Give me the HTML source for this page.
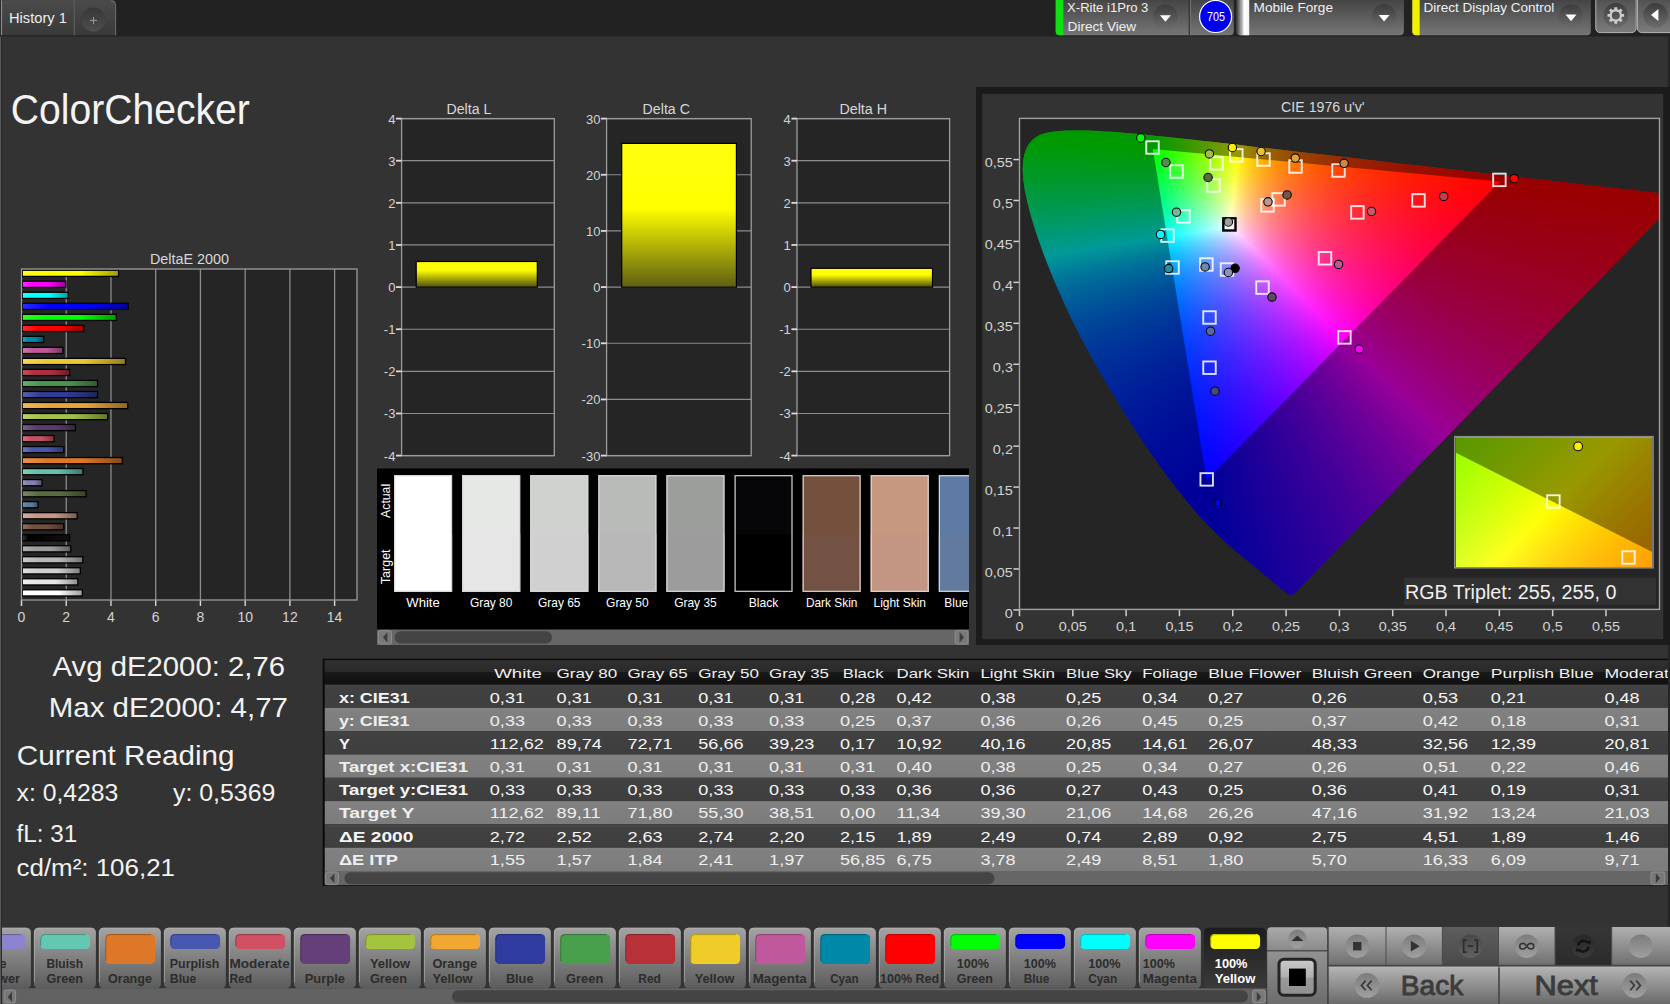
<!DOCTYPE html>
<html lang="en"><head><meta charset="utf-8"><title>ColorChecker</title>
<style>html,body{margin:0;padding:0;background:#333;overflow:hidden;}body{width:1670px;height:1004px;position:relative;overflow:hidden;font-family:"Liberation Sans",sans-serif;}svg{position:absolute;left:0;top:0;}svg text{font-family:"Liberation Sans",sans-serif;}.cl{position:absolute;left:0;top:0;right:0;bottom:0;mix-blend-mode:screen;background-blend-mode:darken;}</style></head><body>
<svg width="1670" height="1004" viewBox="0 0 1670 1004"><defs>
<linearGradient id="gPanel" x1="0" y1="0" x2="0" y2="1"><stop offset="0" stop-color="#454545"/><stop offset="1" stop-color="#767676"/></linearGradient>
<linearGradient id="gTab" x1="0" y1="0" x2="0" y2="1"><stop offset="0" stop-color="#4b4b4b"/><stop offset="1" stop-color="#393939"/></linearGradient>
<linearGradient id="gDrop" x1="0" y1="0" x2="0" y2="1"><stop offset="0" stop-color="#3c3c3c"/><stop offset="1" stop-color="#6c6c6c"/></linearGradient>
<linearGradient id="gGear" x1="0" y1="0" x2="0" y2="1"><stop offset="0" stop-color="#505050"/><stop offset="1" stop-color="#7c7c7c"/></linearGradient>
<linearGradient id="gWhiteStripe" x1="0" y1="0" x2="1" y2="0"><stop offset="0" stop-color="#3a3a3a"/><stop offset="0.45" stop-color="#bdbdbd"/><stop offset="0.6" stop-color="#ffffff"/><stop offset="1" stop-color="#f4f4f4"/></linearGradient>
<linearGradient id="gPlus" x1="0" y1="0" x2="0" y2="1"><stop offset="0" stop-color="#363636"/><stop offset="1" stop-color="#4e4e4e"/></linearGradient>
<linearGradient id="b0" x1="0" y1="0" x2="1" y2="0"><stop offset="0" stop-color="#ffff2d"/><stop offset="0.25" stop-color="#ffff00"/><stop offset="0.6" stop-color="#ffff00"/><stop offset="1" stop-color="#9e9e00"/></linearGradient>
<linearGradient id="b1" x1="0" y1="0" x2="1" y2="0"><stop offset="0" stop-color="#ff2dff"/><stop offset="0.25" stop-color="#ff00ff"/><stop offset="0.6" stop-color="#ff00ff"/><stop offset="1" stop-color="#9e009e"/></linearGradient>
<linearGradient id="b2" x1="0" y1="0" x2="1" y2="0"><stop offset="0" stop-color="#2dffff"/><stop offset="0.25" stop-color="#00ffff"/><stop offset="0.6" stop-color="#00ffff"/><stop offset="1" stop-color="#009e9e"/></linearGradient>
<linearGradient id="b3" x1="0" y1="0" x2="1" y2="0"><stop offset="0" stop-color="#2d2dff"/><stop offset="0.25" stop-color="#0000ff"/><stop offset="0.6" stop-color="#0000ff"/><stop offset="1" stop-color="#00009e"/></linearGradient>
<linearGradient id="b4" x1="0" y1="0" x2="1" y2="0"><stop offset="0" stop-color="#2dff2d"/><stop offset="0.25" stop-color="#00ff00"/><stop offset="0.6" stop-color="#00ff00"/><stop offset="1" stop-color="#009e00"/></linearGradient>
<linearGradient id="b5" x1="0" y1="0" x2="1" y2="0"><stop offset="0" stop-color="#ff2d2d"/><stop offset="0.25" stop-color="#ff0000"/><stop offset="0.6" stop-color="#ff0000"/><stop offset="1" stop-color="#9e0000"/></linearGradient>
<linearGradient id="b6" x1="0" y1="0" x2="1" y2="0"><stop offset="0" stop-color="#2da1bc"/><stop offset="0.25" stop-color="#0088a8"/><stop offset="0.6" stop-color="#0088a8"/><stop offset="1" stop-color="#005468"/></linearGradient>
<linearGradient id="b7" x1="0" y1="0" x2="1" y2="0"><stop offset="0" stop-color="#d078b2"/><stop offset="0.25" stop-color="#c0589c"/><stop offset="0.6" stop-color="#c0589c"/><stop offset="1" stop-color="#773761"/></linearGradient>
<linearGradient id="b8" x1="0" y1="0" x2="1" y2="0"><stop offset="0" stop-color="#f7d756"/><stop offset="0.25" stop-color="#eec830"/><stop offset="0.6" stop-color="#eec830"/><stop offset="1" stop-color="#947c1e"/></linearGradient>
<linearGradient id="b9" x1="0" y1="0" x2="1" y2="0"><stop offset="0" stop-color="#c35663"/><stop offset="0.25" stop-color="#b03040"/><stop offset="0.6" stop-color="#b03040"/><stop offset="1" stop-color="#6d1e28"/></linearGradient>
<linearGradient id="b10" x1="0" y1="0" x2="1" y2="0"><stop offset="0" stop-color="#6aae6e"/><stop offset="0.25" stop-color="#48984c"/><stop offset="0.6" stop-color="#48984c"/><stop offset="1" stop-color="#2d5e2f"/></linearGradient>
<linearGradient id="b11" x1="0" y1="0" x2="1" y2="0"><stop offset="0" stop-color="#5660ae"/><stop offset="0.25" stop-color="#303c98"/><stop offset="0.6" stop-color="#303c98"/><stop offset="1" stop-color="#1e255e"/></linearGradient>
<linearGradient id="b12" x1="0" y1="0" x2="1" y2="0"><stop offset="0" stop-color="#f2b85d"/><stop offset="0.25" stop-color="#e8a438"/><stop offset="0.6" stop-color="#e8a438"/><stop offset="1" stop-color="#906623"/></linearGradient>
<linearGradient id="b13" x1="0" y1="0" x2="1" y2="0"><stop offset="0" stop-color="#b8d06a"/><stop offset="0.25" stop-color="#a4c048"/><stop offset="0.6" stop-color="#a4c048"/><stop offset="1" stop-color="#66772d"/></linearGradient>
<linearGradient id="b14" x1="0" y1="0" x2="1" y2="0"><stop offset="0" stop-color="#7b6089"/><stop offset="0.25" stop-color="#5c3c6c"/><stop offset="0.6" stop-color="#5c3c6c"/><stop offset="1" stop-color="#392543"/></linearGradient>
<linearGradient id="b15" x1="0" y1="0" x2="1" y2="0"><stop offset="0" stop-color="#d77182"/><stop offset="0.25" stop-color="#c85064"/><stop offset="0.6" stop-color="#c85064"/><stop offset="1" stop-color="#7c323e"/></linearGradient>
<linearGradient id="b16" x1="0" y1="0" x2="1" y2="0"><stop offset="0" stop-color="#6a78bc"/><stop offset="0.25" stop-color="#4858a8"/><stop offset="0.6" stop-color="#4858a8"/><stop offset="1" stop-color="#2d3768"/></linearGradient>
<linearGradient id="b17" x1="0" y1="0" x2="1" y2="0"><stop offset="0" stop-color="#e8934f"/><stop offset="0.25" stop-color="#dc7828"/><stop offset="0.6" stop-color="#dc7828"/><stop offset="1" stop-color="#884a19"/></linearGradient>
<linearGradient id="b18" x1="0" y1="0" x2="1" y2="0"><stop offset="0" stop-color="#82d0bc"/><stop offset="0.25" stop-color="#64c0a8"/><stop offset="0.6" stop-color="#64c0a8"/><stop offset="1" stop-color="#3e7768"/></linearGradient>
<linearGradient id="b19" x1="0" y1="0" x2="1" y2="0"><stop offset="0" stop-color="#9d9ac6"/><stop offset="0.25" stop-color="#8480b4"/><stop offset="0.6" stop-color="#8480b4"/><stop offset="1" stop-color="#524f70"/></linearGradient>
<linearGradient id="b20" x1="0" y1="0" x2="1" y2="0"><stop offset="0" stop-color="#788963"/><stop offset="0.25" stop-color="#586c40"/><stop offset="0.6" stop-color="#586c40"/><stop offset="1" stop-color="#374328"/></linearGradient>
<linearGradient id="b21" x1="0" y1="0" x2="1" y2="0"><stop offset="0" stop-color="#7b96b5"/><stop offset="0.25" stop-color="#5c7ca0"/><stop offset="0.6" stop-color="#5c7ca0"/><stop offset="1" stop-color="#394d63"/></linearGradient>
<linearGradient id="b22" x1="0" y1="0" x2="1" y2="0"><stop offset="0" stop-color="#d4ae9d"/><stop offset="0.25" stop-color="#c49884"/><stop offset="0.6" stop-color="#c49884"/><stop offset="1" stop-color="#7a5e52"/></linearGradient>
<linearGradient id="b23" x1="0" y1="0" x2="1" y2="0"><stop offset="0" stop-color="#907163"/><stop offset="0.25" stop-color="#745040"/><stop offset="0.6" stop-color="#745040"/><stop offset="1" stop-color="#483228"/></linearGradient>
<linearGradient id="b24" x1="0" y1="0" x2="1" y2="0"><stop offset="0" stop-color="#3a3a3a"/><stop offset="0.12" stop-color="#000"/><stop offset="1" stop-color="#101010"/></linearGradient>
<linearGradient id="b25" x1="0" y1="0" x2="1" y2="0"><stop offset="0" stop-color="#b2b2b2"/><stop offset="0.25" stop-color="#9c9c9c"/><stop offset="0.6" stop-color="#9c9c9c"/><stop offset="1" stop-color="#616161"/></linearGradient>
<linearGradient id="b26" x1="0" y1="0" x2="1" y2="0"><stop offset="0" stop-color="#c9c9c9"/><stop offset="0.25" stop-color="#b8b8b8"/><stop offset="0.6" stop-color="#b8b8b8"/><stop offset="1" stop-color="#727272"/></linearGradient>
<linearGradient id="b27" x1="0" y1="0" x2="1" y2="0"><stop offset="0" stop-color="#dedede"/><stop offset="0.25" stop-color="#d0d0d0"/><stop offset="0.6" stop-color="#d0d0d0"/><stop offset="1" stop-color="#818181"/></linearGradient>
<linearGradient id="b28" x1="0" y1="0" x2="1" y2="0"><stop offset="0" stop-color="#f0f0f0"/><stop offset="0.25" stop-color="#e6e6e6"/><stop offset="0.6" stop-color="#e6e6e6"/><stop offset="1" stop-color="#8f8f8f"/></linearGradient>
<linearGradient id="b29" x1="0" y1="0" x2="1" y2="0"><stop offset="0" stop-color="#ffffff"/><stop offset="0.25" stop-color="#ffffff"/><stop offset="0.6" stop-color="#ffffff"/><stop offset="1" stop-color="#9e9e9e"/></linearGradient>
<linearGradient id="gYel" x1="0" y1="0" x2="0" y2="1"><stop offset="0" stop-color="#ffff10"/><stop offset="0.45" stop-color="#ffff00"/><stop offset="1" stop-color="#5e5e12"/></linearGradient>
<linearGradient id="gYelS" x1="0" y1="0" x2="0" y2="1"><stop offset="0" stop-color="#ffff10"/><stop offset="0.35" stop-color="#fcfc00"/><stop offset="1" stop-color="#4c4c10"/></linearGradient>
<linearGradient id="gHdr" x1="0" y1="0" x2="0" y2="1"><stop offset="0" stop-color="#303030"/><stop offset="0.48" stop-color="#2a2a2a"/><stop offset="0.5" stop-color="#191919"/><stop offset="1" stop-color="#101010"/></linearGradient>
<linearGradient id="gRowD" x1="0" y1="0" x2="0" y2="1"><stop offset="0" stop-color="#454545"/><stop offset="0.15" stop-color="#414141"/><stop offset="1" stop-color="#3e3e3e"/></linearGradient>
<linearGradient id="gRowL" x1="0" y1="0" x2="0" y2="1"><stop offset="0" stop-color="#848484"/><stop offset="0.15" stop-color="#808080"/><stop offset="1" stop-color="#7c7c7c"/></linearGradient>
<linearGradient id="gBtn" x1="0" y1="0" x2="0" y2="1"><stop offset="0" stop-color="#a4a4a4"/><stop offset="1" stop-color="#5c5c5c"/></linearGradient>
<linearGradient id="gBtnSel" x1="0" y1="0" x2="0" y2="1"><stop offset="0" stop-color="#1c1c1c"/><stop offset="1" stop-color="#3a3a3a"/></linearGradient>
<linearGradient id="gCtl" x1="0" y1="0" x2="0" y2="1"><stop offset="0" stop-color="#b0b0b0"/><stop offset="1" stop-color="#707070"/></linearGradient>
<linearGradient id="gCtlD" x1="0" y1="0" x2="0" y2="1"><stop offset="0" stop-color="#5e5e5e"/><stop offset="1" stop-color="#4a4a4a"/></linearGradient>
<linearGradient id="gCtlDD" x1="0" y1="0" x2="0" y2="1"><stop offset="0" stop-color="#363636"/><stop offset="1" stop-color="#2b2b2b"/></linearGradient>
<linearGradient id="gNav" x1="0" y1="0" x2="0" y2="1"><stop offset="0" stop-color="#b4b4b4"/><stop offset="1" stop-color="#6a6a6a"/></linearGradient>
<linearGradient id="gCirc" x1="0" y1="0" x2="0" y2="1"><stop offset="0" stop-color="#7c7c7c"/><stop offset="1" stop-color="#a0a0a0"/></linearGradient>
<linearGradient id="gCircD" x1="0" y1="0" x2="0" y2="1"><stop offset="0" stop-color="#484848"/><stop offset="1" stop-color="#626262"/></linearGradient>
<linearGradient id="gCircDD" x1="0" y1="0" x2="0" y2="1"><stop offset="0" stop-color="#282828"/><stop offset="1" stop-color="#3a3a3a"/></linearGradient>
<linearGradient id="gUp" x1="0" y1="0" x2="0" y2="1"><stop offset="0" stop-color="#aaaaaa"/><stop offset="1" stop-color="#8a8a8a"/></linearGradient>
<linearGradient id="gStopBg" x1="0" y1="0" x2="0" y2="1"><stop offset="0" stop-color="#929292"/><stop offset="1" stop-color="#6c6c6c"/></linearGradient>
<linearGradient id="gStopFr" x1="0" y1="0" x2="0" y2="1"><stop offset="0" stop-color="#cacaca"/><stop offset="0.5" stop-color="#b0b0b0"/><stop offset="0.52" stop-color="#9a9a9a"/><stop offset="1" stop-color="#909090"/></linearGradient>
</defs>
<rect x="0" y="0" width="1670" height="36.5" fill="#222"/>
<path d="M1.5 35.2 V3 Q1.5 0 4.5 0 H111 Q116 0 116 5 V35.2Z" fill="url(#gTab)"/>
<line x1="1.5" y1="0" x2="1.5" y2="35.2" stroke="#8c8c8c" stroke-width="1.2"/>
<line x1="74.3" y1="0" x2="74.3" y2="35.2" stroke="#5c5c5c" stroke-width="1.2"/>
<path d="M111 0.8 Q115.6 1.4 115.6 6 V35.2" fill="none" stroke="#6a6a6a" stroke-width="1.1"/>
<text x="9" y="23.4" font-size="14.6" fill="#eeeeee" textLength="57.8" lengthAdjust="spacingAndGlyphs">History 1</text>
<circle cx="93.4" cy="19.4" r="12" fill="url(#gPlus)"/>
<path d="M90 20.4 h7 M93.5 16.9 v7" stroke="#9a9a9a" stroke-width="1" fill="none"/>
<path d="M1055.7 0 H1233.8 V31.3 Q1233.8 35.3 1229.8 35.3 H1059.7 Q1055.7 35.3 1055.7 31.3Z" fill="url(#gPanel)"/>
<path d="M1055.7 0 H1063.4 V35.3 H1059.7 Q1055.7 35.3 1055.7 31.3Z" fill="#10e010"/>
<line x1="1189.3" y1="0" x2="1189.3" y2="35.3" stroke="#333" stroke-width="1.2"/>
<line x1="1190.5" y1="0" x2="1190.5" y2="35.3" stroke="#7a7a7a" stroke-width="0.8"/>
<text x="1067.1" y="12" font-size="12.2" fill="#f0f0f0" textLength="81.3" lengthAdjust="spacingAndGlyphs">X-Rite i1Pro 3</text>
<text x="1067.6" y="30.5" font-size="12.2" fill="#f0f0f0" textLength="68.6" lengthAdjust="spacingAndGlyphs">Direct View</text>
<circle cx="1165.4" cy="16.8" r="12.3" fill="url(#gDrop)"/><path d="M1159.9 15.2 h11 l-5.5 6.6Z" fill="#fff"/>
<circle cx="1215.6" cy="16.5" r="16" fill="#0000f0" stroke="#fff" stroke-width="1.2"/>
<text x="1206.9" y="21.3" font-size="12.2" fill="#fff" textLength="18" lengthAdjust="spacingAndGlyphs">705</text>
<path d="M1236.6 0 H1403.9 V31.3 Q1403.9 35.3 1399.9 35.3 H1240.6 Q1236.6 35.3 1236.6 31.3Z" fill="url(#gPanel)"/>
<path d="M1236.6 0 H1249.2 V35.3 H1240.6 Q1236.6 35.3 1236.6 31.3Z" fill="url(#gWhiteStripe)"/>
<text x="1253.6" y="12" font-size="12.2" fill="#f0f0f0" textLength="79.4" lengthAdjust="spacingAndGlyphs">Mobile Forge</text>
<circle cx="1384.1" cy="16.5" r="12.3" fill="url(#gDrop)"/><path d="M1378.6 14.9 h11 l-5.5 6.6Z" fill="#fff"/>
<path d="M1412.3 0 H1590.8 V31.3 Q1590.8 35.3 1586.8 35.3 H1416.3 Q1412.3 35.3 1412.3 31.3Z" fill="url(#gPanel)"/>
<path d="M1412.3 0 H1419.7 V35.3 H1416.3 Q1412.3 35.3 1412.3 31.3Z" fill="#f0f000"/>
<text x="1423.4" y="12.1" font-size="12.2" fill="#f0f0f0" textLength="131" lengthAdjust="spacingAndGlyphs">Direct Display Control</text>
<circle cx="1571" cy="16.2" r="12" fill="url(#gDrop)"/><path d="M1565.5 14.6 h11 l-5.5 6.6Z" fill="#fff"/>
<path d="M1595.8 -2 H1636.2 V27.8 Q1636.2 32.6 1631.2 32.6 H1600.8 Q1595.8 32.6 1595.8 27.8Z" fill="url(#gGear)" stroke="#b4b4b4" stroke-width="1"/>
<circle cx="1615.8" cy="15.4" r="12.3" fill="url(#gDrop)"/>
<path d="M1624.07 13.96 L1624.07 16.84 L1621.93 16.87 L1621.17 18.69 L1622.67 20.23 L1620.63 22.27 L1619.09 20.77 L1617.27 21.53 L1617.24 23.67 L1614.36 23.67 L1614.33 21.53 L1612.51 20.77 L1610.97 22.27 L1608.93 20.23 L1610.43 18.69 L1609.67 16.87 L1607.53 16.84 L1607.53 13.96 L1609.67 13.93 L1610.43 12.11 L1608.93 10.57 L1610.97 8.53 L1612.51 10.03 L1614.33 9.27 L1614.36 7.13 L1617.24 7.13 L1617.27 9.27 L1619.09 10.03 L1620.63 8.53 L1622.67 10.57 L1621.17 12.11 L1621.93 13.93Z M1611.8 15.4 a4 4 0 1 0 8 0 a4 4 0 1 0 -8 0Z" fill="#cdcdcd" fill-rule="evenodd"/>
<path d="M1637.4 -2 H1675 V32.6 H1642.4 Q1637.4 32.6 1637.4 27.8Z" fill="url(#gGear)" stroke="#b4b4b4" stroke-width="1"/>
<circle cx="1655.6" cy="15.4" r="12.3" fill="url(#gDrop)"/>
<path d="M1651 15 L1658.4 8.9 V21.1Z" fill="#fff"/>
<rect x="0" y="36.5" width="1" height="967.5" fill="#585858"/>
<rect x="1" y="36.5" width="1" height="967.5" fill="#292929"/>
<rect x="1667.8" y="36.5" width="2.2" height="889.5" fill="#242424"/>
<text x="10.8" y="123.6" font-size="42.2" fill="#f4f4f4" textLength="239" lengthAdjust="spacingAndGlyphs">ColorChecker</text>
<text x="149.9" y="263.5" font-size="14" fill="#d8d8d8" textLength="79.1" lengthAdjust="spacingAndGlyphs">DeltaE 2000</text>
<rect x="21.5" y="269" width="335.5" height="331" fill="#252525"/>
<line x1="66.23" y1="269" x2="66.23" y2="600" stroke="#8c8c8c" stroke-width="1.3"/>
<line x1="66.23" y1="600" x2="66.23" y2="606" stroke="#d8d8d8" stroke-width="1.4"/>
<line x1="110.97" y1="269" x2="110.97" y2="600" stroke="#8c8c8c" stroke-width="1.3"/>
<line x1="110.97" y1="600" x2="110.97" y2="606" stroke="#d8d8d8" stroke-width="1.4"/>
<line x1="155.7" y1="269" x2="155.7" y2="600" stroke="#8c8c8c" stroke-width="1.3"/>
<line x1="155.7" y1="600" x2="155.7" y2="606" stroke="#d8d8d8" stroke-width="1.4"/>
<line x1="200.43" y1="269" x2="200.43" y2="600" stroke="#8c8c8c" stroke-width="1.3"/>
<line x1="200.43" y1="600" x2="200.43" y2="606" stroke="#d8d8d8" stroke-width="1.4"/>
<line x1="245.17" y1="269" x2="245.17" y2="600" stroke="#8c8c8c" stroke-width="1.3"/>
<line x1="245.17" y1="600" x2="245.17" y2="606" stroke="#d8d8d8" stroke-width="1.4"/>
<line x1="289.9" y1="269" x2="289.9" y2="600" stroke="#8c8c8c" stroke-width="1.3"/>
<line x1="289.9" y1="600" x2="289.9" y2="606" stroke="#d8d8d8" stroke-width="1.4"/>
<line x1="334.63" y1="269" x2="334.63" y2="600" stroke="#8c8c8c" stroke-width="1.3"/>
<line x1="334.63" y1="600" x2="334.63" y2="606" stroke="#d8d8d8" stroke-width="1.4"/>
<line x1="21.5" y1="600" x2="21.5" y2="606" stroke="#d8d8d8" stroke-width="1.5"/>
<rect x="22.3" y="270.2" width="96.27" height="6.2" fill="url(#b0)" stroke="#000" stroke-width="1.3"/>
<rect x="22.3" y="281.22" width="43.49" height="6.2" fill="url(#b1)" stroke="#000" stroke-width="1.3"/>
<rect x="22.3" y="292.24" width="45.95" height="6.2" fill="url(#b2)" stroke="#000" stroke-width="1.3"/>
<rect x="22.3" y="303.26" width="105.89" height="6.2" fill="url(#b3)" stroke="#000" stroke-width="1.3"/>
<rect x="22.3" y="314.28" width="94.03" height="6.2" fill="url(#b4)" stroke="#000" stroke-width="1.3"/>
<rect x="22.3" y="325.3" width="61.38" height="6.2" fill="url(#b5)" stroke="#000" stroke-width="1.3"/>
<rect x="22.3" y="336.32" width="21.34" height="6.2" fill="url(#b6)" stroke="#000" stroke-width="1.3"/>
<rect x="22.3" y="347.34" width="40.58" height="6.2" fill="url(#b7)" stroke="#000" stroke-width="1.3"/>
<rect x="22.3" y="358.36" width="103.21" height="6.2" fill="url(#b8)" stroke="#000" stroke-width="1.3"/>
<rect x="22.3" y="369.38" width="47.29" height="6.2" fill="url(#b9)" stroke="#000" stroke-width="1.3"/>
<rect x="22.3" y="380.4" width="75.25" height="6.2" fill="url(#b10)" stroke="#000" stroke-width="1.3"/>
<rect x="22.3" y="391.42" width="75.25" height="6.2" fill="url(#b11)" stroke="#000" stroke-width="1.3"/>
<rect x="22.3" y="402.44" width="105.44" height="6.2" fill="url(#b12)" stroke="#000" stroke-width="1.3"/>
<rect x="22.3" y="413.46" width="85.31" height="6.2" fill="url(#b13)" stroke="#000" stroke-width="1.3"/>
<rect x="22.3" y="424.48" width="53.1" height="6.2" fill="url(#b14)" stroke="#000" stroke-width="1.3"/>
<rect x="22.3" y="435.5" width="31.86" height="6.2" fill="url(#b15)" stroke="#000" stroke-width="1.3"/>
<rect x="22.3" y="446.52" width="41.47" height="6.2" fill="url(#b16)" stroke="#000" stroke-width="1.3"/>
<rect x="22.3" y="457.54" width="100.07" height="6.2" fill="url(#b17)" stroke="#000" stroke-width="1.3"/>
<rect x="22.3" y="468.56" width="60.71" height="6.2" fill="url(#b18)" stroke="#000" stroke-width="1.3"/>
<rect x="22.3" y="479.58" width="19.78" height="6.2" fill="url(#b19)" stroke="#000" stroke-width="1.3"/>
<rect x="22.3" y="490.6" width="63.84" height="6.2" fill="url(#b20)" stroke="#000" stroke-width="1.3"/>
<rect x="22.3" y="501.62" width="15.75" height="6.2" fill="url(#b21)" stroke="#000" stroke-width="1.3"/>
<rect x="22.3" y="512.64" width="54.89" height="6.2" fill="url(#b22)" stroke="#000" stroke-width="1.3"/>
<rect x="22.3" y="523.66" width="41.47" height="6.2" fill="url(#b23)" stroke="#000" stroke-width="1.3"/>
<rect x="22.3" y="534.68" width="47.29" height="6.2" fill="url(#b24)" stroke="#000" stroke-width="1.3"/>
<rect x="22.3" y="545.7" width="48.41" height="6.2" fill="url(#b25)" stroke="#000" stroke-width="1.3"/>
<rect x="22.3" y="556.72" width="60.48" height="6.2" fill="url(#b26)" stroke="#000" stroke-width="1.3"/>
<rect x="22.3" y="567.74" width="58.02" height="6.2" fill="url(#b27)" stroke="#000" stroke-width="1.3"/>
<rect x="22.3" y="578.76" width="55.56" height="6.2" fill="url(#b28)" stroke="#000" stroke-width="1.3"/>
<rect x="22.3" y="589.78" width="60.04" height="6.2" fill="url(#b29)" stroke="#000" stroke-width="1.3"/>
<rect x="21.5" y="269" width="335.5" height="331" fill="none" stroke="#9c9c9c" stroke-width="1.3"/>
<text x="21.5" y="622.2" font-size="14" fill="#d4d4d4" text-anchor="middle">0</text>
<text x="66.23" y="622.2" font-size="14" fill="#d4d4d4" text-anchor="middle">2</text>
<text x="110.97" y="622.2" font-size="14" fill="#d4d4d4" text-anchor="middle">4</text>
<text x="155.7" y="622.2" font-size="14" fill="#d4d4d4" text-anchor="middle">6</text>
<text x="200.43" y="622.2" font-size="14" fill="#d4d4d4" text-anchor="middle">8</text>
<text x="245.17" y="622.2" font-size="14" fill="#d4d4d4" text-anchor="middle">10</text>
<text x="289.9" y="622.2" font-size="14" fill="#d4d4d4" text-anchor="middle">12</text>
<text x="334.63" y="622.2" font-size="14" fill="#d4d4d4" text-anchor="middle">14</text>
<text x="446.5" y="114.2" font-size="14" fill="#d8d8d8" textLength="44.9" lengthAdjust="spacingAndGlyphs">Delta L</text>
<rect x="401.6" y="118.6" width="152.7" height="337" fill="#252525"/>
<line x1="401.6" y1="118.6" x2="554.3" y2="118.6" stroke="#8c8c8c" stroke-width="1.2"/>
<line x1="401.6" y1="160.72" x2="554.3" y2="160.72" stroke="#8c8c8c" stroke-width="1.2"/>
<line x1="401.6" y1="202.85" x2="554.3" y2="202.85" stroke="#8c8c8c" stroke-width="1.2"/>
<line x1="401.6" y1="244.97" x2="554.3" y2="244.97" stroke="#8c8c8c" stroke-width="1.2"/>
<line x1="401.6" y1="287.1" x2="554.3" y2="287.1" stroke="#8c8c8c" stroke-width="1.2"/>
<line x1="401.6" y1="329.23" x2="554.3" y2="329.23" stroke="#8c8c8c" stroke-width="1.2"/>
<line x1="401.6" y1="371.35" x2="554.3" y2="371.35" stroke="#8c8c8c" stroke-width="1.2"/>
<line x1="401.6" y1="413.48" x2="554.3" y2="413.48" stroke="#8c8c8c" stroke-width="1.2"/>
<line x1="401.6" y1="455.6" x2="554.3" y2="455.6" stroke="#8c8c8c" stroke-width="1.2"/>
<rect x="401.6" y="118.6" width="152.7" height="337" fill="none" stroke="#9c9c9c" stroke-width="1.3"/>
<line x1="396" y1="118.6" x2="401.6" y2="118.6" stroke="#dcdcdc" stroke-width="1.8"/>
<text x="395.4" y="123.5" font-size="13" fill="#d4d4d4" text-anchor="end">4</text>
<line x1="396" y1="160.72" x2="401.6" y2="160.72" stroke="#dcdcdc" stroke-width="1.8"/>
<text x="395.4" y="165.62" font-size="13" fill="#d4d4d4" text-anchor="end">3</text>
<line x1="396" y1="202.85" x2="401.6" y2="202.85" stroke="#dcdcdc" stroke-width="1.8"/>
<text x="395.4" y="207.75" font-size="13" fill="#d4d4d4" text-anchor="end">2</text>
<line x1="396" y1="244.97" x2="401.6" y2="244.97" stroke="#dcdcdc" stroke-width="1.8"/>
<text x="395.4" y="249.88" font-size="13" fill="#d4d4d4" text-anchor="end">1</text>
<line x1="396" y1="287.1" x2="401.6" y2="287.1" stroke="#dcdcdc" stroke-width="1.8"/>
<text x="395.4" y="292" font-size="13" fill="#d4d4d4" text-anchor="end">0</text>
<line x1="396" y1="329.23" x2="401.6" y2="329.23" stroke="#dcdcdc" stroke-width="1.8"/>
<text x="395.4" y="334.12" font-size="13" fill="#d4d4d4" text-anchor="end">-1</text>
<line x1="396" y1="371.35" x2="401.6" y2="371.35" stroke="#dcdcdc" stroke-width="1.8"/>
<text x="395.4" y="376.25" font-size="13" fill="#d4d4d4" text-anchor="end">-2</text>
<line x1="396" y1="413.48" x2="401.6" y2="413.48" stroke="#dcdcdc" stroke-width="1.8"/>
<text x="395.4" y="418.38" font-size="13" fill="#d4d4d4" text-anchor="end">-3</text>
<line x1="396" y1="455.6" x2="401.6" y2="455.6" stroke="#dcdcdc" stroke-width="1.8"/>
<text x="395.4" y="460.5" font-size="13" fill="#d4d4d4" text-anchor="end">-4</text>
<rect x="416.2" y="261.5" width="121.1" height="25.7" fill="url(#gYelS)" stroke="#000" stroke-width="1.2"/>
<text x="642.6" y="114.2" font-size="14" fill="#d8d8d8" textLength="47.3" lengthAdjust="spacingAndGlyphs">Delta C</text>
<rect x="606.6" y="118.6" width="144.6" height="337" fill="#252525"/>
<line x1="606.6" y1="118.6" x2="751.2" y2="118.6" stroke="#8c8c8c" stroke-width="1.2"/>
<line x1="606.6" y1="174.77" x2="751.2" y2="174.77" stroke="#8c8c8c" stroke-width="1.2"/>
<line x1="606.6" y1="230.93" x2="751.2" y2="230.93" stroke="#8c8c8c" stroke-width="1.2"/>
<line x1="606.6" y1="287.1" x2="751.2" y2="287.1" stroke="#8c8c8c" stroke-width="1.2"/>
<line x1="606.6" y1="343.27" x2="751.2" y2="343.27" stroke="#8c8c8c" stroke-width="1.2"/>
<line x1="606.6" y1="399.43" x2="751.2" y2="399.43" stroke="#8c8c8c" stroke-width="1.2"/>
<line x1="606.6" y1="455.6" x2="751.2" y2="455.6" stroke="#8c8c8c" stroke-width="1.2"/>
<rect x="606.6" y="118.6" width="144.6" height="337" fill="none" stroke="#9c9c9c" stroke-width="1.3"/>
<line x1="601" y1="118.6" x2="606.6" y2="118.6" stroke="#dcdcdc" stroke-width="1.8"/>
<text x="600.4" y="123.5" font-size="13" fill="#d4d4d4" text-anchor="end">30</text>
<line x1="601" y1="174.77" x2="606.6" y2="174.77" stroke="#dcdcdc" stroke-width="1.8"/>
<text x="600.4" y="179.67" font-size="13" fill="#d4d4d4" text-anchor="end">20</text>
<line x1="601" y1="230.93" x2="606.6" y2="230.93" stroke="#dcdcdc" stroke-width="1.8"/>
<text x="600.4" y="235.83" font-size="13" fill="#d4d4d4" text-anchor="end">10</text>
<line x1="601" y1="287.1" x2="606.6" y2="287.1" stroke="#dcdcdc" stroke-width="1.8"/>
<text x="600.4" y="292" font-size="13" fill="#d4d4d4" text-anchor="end">0</text>
<line x1="601" y1="343.27" x2="606.6" y2="343.27" stroke="#dcdcdc" stroke-width="1.8"/>
<text x="600.4" y="348.17" font-size="13" fill="#d4d4d4" text-anchor="end">-10</text>
<line x1="601" y1="399.43" x2="606.6" y2="399.43" stroke="#dcdcdc" stroke-width="1.8"/>
<text x="600.4" y="404.33" font-size="13" fill="#d4d4d4" text-anchor="end">-20</text>
<line x1="601" y1="455.6" x2="606.6" y2="455.6" stroke="#dcdcdc" stroke-width="1.8"/>
<text x="600.4" y="460.5" font-size="13" fill="#d4d4d4" text-anchor="end">-30</text>
<rect x="621.7" y="143.4" width="114.7" height="143.8" fill="url(#gYel)" stroke="#000" stroke-width="1.2"/>
<text x="839.4" y="114.2" font-size="14" fill="#d8d8d8" textLength="47.7" lengthAdjust="spacingAndGlyphs">Delta H</text>
<rect x="797" y="118.6" width="152.6" height="337" fill="#252525"/>
<line x1="797" y1="118.6" x2="949.6" y2="118.6" stroke="#8c8c8c" stroke-width="1.2"/>
<line x1="797" y1="160.72" x2="949.6" y2="160.72" stroke="#8c8c8c" stroke-width="1.2"/>
<line x1="797" y1="202.85" x2="949.6" y2="202.85" stroke="#8c8c8c" stroke-width="1.2"/>
<line x1="797" y1="244.97" x2="949.6" y2="244.97" stroke="#8c8c8c" stroke-width="1.2"/>
<line x1="797" y1="287.1" x2="949.6" y2="287.1" stroke="#8c8c8c" stroke-width="1.2"/>
<line x1="797" y1="329.23" x2="949.6" y2="329.23" stroke="#8c8c8c" stroke-width="1.2"/>
<line x1="797" y1="371.35" x2="949.6" y2="371.35" stroke="#8c8c8c" stroke-width="1.2"/>
<line x1="797" y1="413.48" x2="949.6" y2="413.48" stroke="#8c8c8c" stroke-width="1.2"/>
<line x1="797" y1="455.6" x2="949.6" y2="455.6" stroke="#8c8c8c" stroke-width="1.2"/>
<rect x="797" y="118.6" width="152.6" height="337" fill="none" stroke="#9c9c9c" stroke-width="1.3"/>
<line x1="791.4" y1="118.6" x2="797" y2="118.6" stroke="#dcdcdc" stroke-width="1.8"/>
<text x="790.8" y="123.5" font-size="13" fill="#d4d4d4" text-anchor="end">4</text>
<line x1="791.4" y1="160.72" x2="797" y2="160.72" stroke="#dcdcdc" stroke-width="1.8"/>
<text x="790.8" y="165.62" font-size="13" fill="#d4d4d4" text-anchor="end">3</text>
<line x1="791.4" y1="202.85" x2="797" y2="202.85" stroke="#dcdcdc" stroke-width="1.8"/>
<text x="790.8" y="207.75" font-size="13" fill="#d4d4d4" text-anchor="end">2</text>
<line x1="791.4" y1="244.97" x2="797" y2="244.97" stroke="#dcdcdc" stroke-width="1.8"/>
<text x="790.8" y="249.88" font-size="13" fill="#d4d4d4" text-anchor="end">1</text>
<line x1="791.4" y1="287.1" x2="797" y2="287.1" stroke="#dcdcdc" stroke-width="1.8"/>
<text x="790.8" y="292" font-size="13" fill="#d4d4d4" text-anchor="end">0</text>
<line x1="791.4" y1="329.23" x2="797" y2="329.23" stroke="#dcdcdc" stroke-width="1.8"/>
<text x="790.8" y="334.12" font-size="13" fill="#d4d4d4" text-anchor="end">-1</text>
<line x1="791.4" y1="371.35" x2="797" y2="371.35" stroke="#dcdcdc" stroke-width="1.8"/>
<text x="790.8" y="376.25" font-size="13" fill="#d4d4d4" text-anchor="end">-2</text>
<line x1="791.4" y1="413.48" x2="797" y2="413.48" stroke="#dcdcdc" stroke-width="1.8"/>
<text x="790.8" y="418.38" font-size="13" fill="#d4d4d4" text-anchor="end">-3</text>
<line x1="791.4" y1="455.6" x2="797" y2="455.6" stroke="#dcdcdc" stroke-width="1.8"/>
<text x="790.8" y="460.5" font-size="13" fill="#d4d4d4" text-anchor="end">-4</text>
<rect x="811" y="268.3" width="121.5" height="18.9" fill="url(#gYelS)" stroke="#000" stroke-width="1.2"/>
<clipPath id="cSw"><rect x="377" y="468.5" width="592" height="176.5"/></clipPath>
<rect x="377" y="468.5" width="592" height="176.5" fill="#000"/>
<g clip-path="url(#cSw)">
<rect x="394" y="475.1" width="58.1" height="116.8" fill="#ffffff"/>
<rect x="394" y="534" width="58.1" height="57.9" fill="#ffffff"/>
<rect x="394.6" y="475.7" width="56.9" height="115.6" fill="none" stroke="#d6d6d6" stroke-width="1.2"/>
<text x="406.3" y="606.6" font-size="12.2" fill="#fff" textLength="33.5" lengthAdjust="spacingAndGlyphs">White</text>
<rect x="462.1" y="475.1" width="58.1" height="116.8" fill="#e6e8e6"/>
<rect x="462.1" y="534" width="58.1" height="57.9" fill="#e6e6e6"/>
<rect x="462.7" y="475.7" width="56.9" height="115.6" fill="none" stroke="#d6d6d6" stroke-width="1.2"/>
<text x="469.9" y="606.6" font-size="12.2" fill="#fff" textLength="42.5" lengthAdjust="spacingAndGlyphs">Gray 80</text>
<rect x="530.2" y="475.1" width="58.1" height="116.8" fill="#d0d2d0"/>
<rect x="530.2" y="534" width="58.1" height="57.9" fill="#d0d0d0"/>
<rect x="530.8" y="475.7" width="56.9" height="115.6" fill="none" stroke="#d6d6d6" stroke-width="1.2"/>
<text x="538" y="606.6" font-size="12.2" fill="#fff" textLength="42.5" lengthAdjust="spacingAndGlyphs">Gray 65</text>
<rect x="598.3" y="475.1" width="58.1" height="116.8" fill="#b9bbb9"/>
<rect x="598.3" y="534" width="58.1" height="57.9" fill="#b8b8b8"/>
<rect x="598.9" y="475.7" width="56.9" height="115.6" fill="none" stroke="#d6d6d6" stroke-width="1.2"/>
<text x="606.1" y="606.6" font-size="12.2" fill="#fff" textLength="42.5" lengthAdjust="spacingAndGlyphs">Gray 50</text>
<rect x="666.4" y="475.1" width="58.1" height="116.8" fill="#9c9e9c"/>
<rect x="666.4" y="534" width="58.1" height="57.9" fill="#9c9c9c"/>
<rect x="667" y="475.7" width="56.9" height="115.6" fill="none" stroke="#d6d6d6" stroke-width="1.2"/>
<text x="674.2" y="606.6" font-size="12.2" fill="#fff" textLength="42.5" lengthAdjust="spacingAndGlyphs">Gray 35</text>
<rect x="734.5" y="475.1" width="58.1" height="116.8" fill="#060609"/>
<rect x="734.5" y="534" width="58.1" height="57.9" fill="#000000"/>
<rect x="735.1" y="475.7" width="56.9" height="115.6" fill="none" stroke="#d6d6d6" stroke-width="1.2"/>
<text x="748.8" y="606.6" font-size="12.2" fill="#fff" textLength="29.5" lengthAdjust="spacingAndGlyphs">Black</text>
<rect x="802.6" y="475.1" width="58.1" height="116.8" fill="#74503d"/>
<rect x="802.6" y="534" width="58.1" height="57.9" fill="#735244"/>
<rect x="803.2" y="475.7" width="56.9" height="115.6" fill="none" stroke="#d6d6d6" stroke-width="1.2"/>
<text x="805.9" y="606.6" font-size="12.2" fill="#fff" textLength="51.5" lengthAdjust="spacingAndGlyphs">Dark Skin</text>
<rect x="870.7" y="475.1" width="58.1" height="116.8" fill="#c69880"/>
<rect x="870.7" y="534" width="58.1" height="57.9" fill="#c29682"/>
<rect x="871.3" y="475.7" width="56.9" height="115.6" fill="none" stroke="#d6d6d6" stroke-width="1.2"/>
<text x="873.5" y="606.6" font-size="12.2" fill="#fff" textLength="52.5" lengthAdjust="spacingAndGlyphs">Light Skin</text>
<rect x="938.8" y="475.1" width="58.1" height="116.8" fill="#5e7ba3"/>
<rect x="938.8" y="534" width="58.1" height="57.9" fill="#627a9d"/>
<rect x="939.4" y="475.7" width="56.9" height="115.6" fill="none" stroke="#d6d6d6" stroke-width="1.2"/>
<text x="944.35" y="606.6" font-size="12.2" fill="#fff" textLength="47" lengthAdjust="spacingAndGlyphs">Blue Sky</text>
</g>
<text transform="translate(389.6 517.9) rotate(-90)" font-size="12.2" fill="#fff" textLength="34" lengthAdjust="spacingAndGlyphs">Actual</text>
<text transform="translate(389.6 584.2) rotate(-90)" font-size="12.2" fill="#fff" textLength="34.8" lengthAdjust="spacingAndGlyphs">Target</text>
<rect x="377" y="629.5" width="592" height="15.5" fill="#666"/>
<rect x="378.4" y="630.6" width="13.2" height="13.4" fill="#787878" stroke="#989898" stroke-width="0.8" rx="2"/>
<path d="M387.4 632.2 V642.4 L383 637.3Z" fill="#3c3c3c"/>
<rect x="955.2" y="630.6" width="12.8" height="13.4" fill="#787878" stroke="#989898" stroke-width="0.8" rx="2"/>
<path d="M959.6 632.2 V642.4 L964 637.3Z" fill="#3c3c3c"/>
<rect x="394.6" y="631.2" width="157.4" height="12.4" fill="#444" rx="6.2"/>
<text x="52.6" y="676.3" font-size="27.4" fill="#f2f2f2" textLength="232.4" lengthAdjust="spacingAndGlyphs">Avg dE2000: 2,76</text>
<text x="48.7" y="717.2" font-size="27.4" fill="#f2f2f2" textLength="239.3" lengthAdjust="spacingAndGlyphs">Max dE2000: 4,77</text>
<text x="16.8" y="765" font-size="28" fill="#f2f2f2" textLength="217.7" lengthAdjust="spacingAndGlyphs">Current Reading</text>
<text x="16.5" y="800.6" font-size="24.4" fill="#f2f2f2" textLength="101.9" lengthAdjust="spacingAndGlyphs">x: 0,4283</text>
<text x="173" y="800.6" font-size="24.4" fill="#f2f2f2" textLength="102.4" lengthAdjust="spacingAndGlyphs">y: 0,5369</text>
<text x="16.5" y="841.5" font-size="24.4" fill="#f2f2f2" textLength="60.7" lengthAdjust="spacingAndGlyphs">fL: 31</text>
<text x="16.5" y="875.7" font-size="24.4" fill="#f2f2f2" textLength="158.5" lengthAdjust="spacingAndGlyphs">cd/m²: 106,21</text>
<clipPath id="cTb"><rect x="324.5" y="659" width="1343.5" height="227"/></clipPath>
<rect x="322.7" y="658.7" width="1345.3" height="227.3" fill="#0a0a0a"/>
<rect x="324.5" y="660.2" width="1343.5" height="24.4" fill="url(#gHdr)"/>
<g clip-path="url(#cTb)">
<text x="494.3" y="677.8" font-size="12.4" fill="#f0f0f0" textLength="47.6" lengthAdjust="spacingAndGlyphs">White</text>
<text x="556.6" y="677.8" font-size="12.4" fill="#f0f0f0" textLength="60.6" lengthAdjust="spacingAndGlyphs">Gray 80</text>
<text x="627.4" y="677.8" font-size="12.4" fill="#f0f0f0" textLength="60.3" lengthAdjust="spacingAndGlyphs">Gray 65</text>
<text x="698.3" y="677.8" font-size="12.4" fill="#f0f0f0" textLength="60.6" lengthAdjust="spacingAndGlyphs">Gray 50</text>
<text x="769.1" y="677.8" font-size="12.4" fill="#f0f0f0" textLength="59.9" lengthAdjust="spacingAndGlyphs">Gray 35</text>
<text x="842.8" y="677.8" font-size="12.4" fill="#f0f0f0" textLength="40.7" lengthAdjust="spacingAndGlyphs">Black</text>
<text x="896.5" y="677.8" font-size="12.4" fill="#f0f0f0" textLength="72.9" lengthAdjust="spacingAndGlyphs">Dark Skin</text>
<text x="980.4" y="677.8" font-size="12.4" fill="#f0f0f0" textLength="74.7" lengthAdjust="spacingAndGlyphs">Light Skin</text>
<text x="1066.1" y="677.8" font-size="12.4" fill="#f0f0f0" textLength="65.6" lengthAdjust="spacingAndGlyphs">Blue Sky</text>
<text x="1142.3" y="677.8" font-size="12.4" fill="#f0f0f0" textLength="55.4" lengthAdjust="spacingAndGlyphs">Foliage</text>
<text x="1208.2" y="677.8" font-size="12.4" fill="#f0f0f0" textLength="93.3" lengthAdjust="spacingAndGlyphs">Blue Flower</text>
<text x="1311.7" y="677.8" font-size="12.4" fill="#f0f0f0" textLength="100.5" lengthAdjust="spacingAndGlyphs">Bluish Green</text>
<text x="1422.8" y="677.8" font-size="12.4" fill="#f0f0f0" textLength="57" lengthAdjust="spacingAndGlyphs">Orange</text>
<text x="1490.8" y="677.8" font-size="12.4" fill="#f0f0f0" textLength="103" lengthAdjust="spacingAndGlyphs">Purplish Blue</text>
<text x="1604.4" y="677.8" font-size="12.4" fill="#f0f0f0" textLength="111.6" lengthAdjust="spacingAndGlyphs">Moderate Red</text>
<rect x="324.5" y="684.6" width="1343.5" height="23.3" fill="url(#gRowD)"/>
<text x="338.9" y="702.7" font-size="15.2" fill="#f6f6f6" font-weight="bold" textLength="70.9" lengthAdjust="spacingAndGlyphs">x: CIE31</text>
<text x="489.8" y="702.7" font-size="15.2" fill="#f6f6f6" textLength="35.2" lengthAdjust="spacingAndGlyphs">0,31</text>
<text x="556.6" y="702.7" font-size="15.2" fill="#f6f6f6" textLength="35.2" lengthAdjust="spacingAndGlyphs">0,31</text>
<text x="627.4" y="702.7" font-size="15.2" fill="#f6f6f6" textLength="35.2" lengthAdjust="spacingAndGlyphs">0,31</text>
<text x="698.3" y="702.7" font-size="15.2" fill="#f6f6f6" textLength="35.2" lengthAdjust="spacingAndGlyphs">0,31</text>
<text x="769.1" y="702.7" font-size="15.2" fill="#f6f6f6" textLength="35.2" lengthAdjust="spacingAndGlyphs">0,31</text>
<text x="840" y="702.7" font-size="15.2" fill="#f6f6f6" textLength="35.2" lengthAdjust="spacingAndGlyphs">0,28</text>
<text x="896.5" y="702.7" font-size="15.2" fill="#f6f6f6" textLength="35.2" lengthAdjust="spacingAndGlyphs">0,42</text>
<text x="980.4" y="702.7" font-size="15.2" fill="#f6f6f6" textLength="35.2" lengthAdjust="spacingAndGlyphs">0,38</text>
<text x="1066.1" y="702.7" font-size="15.2" fill="#f6f6f6" textLength="35.2" lengthAdjust="spacingAndGlyphs">0,25</text>
<text x="1142.3" y="702.7" font-size="15.2" fill="#f6f6f6" textLength="35.2" lengthAdjust="spacingAndGlyphs">0,34</text>
<text x="1208.2" y="702.7" font-size="15.2" fill="#f6f6f6" textLength="35.2" lengthAdjust="spacingAndGlyphs">0,27</text>
<text x="1311.7" y="702.7" font-size="15.2" fill="#f6f6f6" textLength="35.2" lengthAdjust="spacingAndGlyphs">0,26</text>
<text x="1422.8" y="702.7" font-size="15.2" fill="#f6f6f6" textLength="35.2" lengthAdjust="spacingAndGlyphs">0,53</text>
<text x="1490.8" y="702.7" font-size="15.2" fill="#f6f6f6" textLength="35.2" lengthAdjust="spacingAndGlyphs">0,21</text>
<text x="1604.4" y="702.7" font-size="15.2" fill="#f6f6f6" textLength="35.2" lengthAdjust="spacingAndGlyphs">0,48</text>
<rect x="324.5" y="707.9" width="1343.5" height="23.3" fill="url(#gRowL)"/>
<text x="338.9" y="725.84" font-size="15.2" fill="#eeeeee" font-weight="bold" textLength="70.5" lengthAdjust="spacingAndGlyphs">y: CIE31</text>
<text x="489.8" y="725.84" font-size="15.2" fill="#eeeeee" textLength="35.2" lengthAdjust="spacingAndGlyphs">0,33</text>
<text x="556.6" y="725.84" font-size="15.2" fill="#eeeeee" textLength="35.2" lengthAdjust="spacingAndGlyphs">0,33</text>
<text x="627.4" y="725.84" font-size="15.2" fill="#eeeeee" textLength="35.2" lengthAdjust="spacingAndGlyphs">0,33</text>
<text x="698.3" y="725.84" font-size="15.2" fill="#eeeeee" textLength="35.2" lengthAdjust="spacingAndGlyphs">0,33</text>
<text x="769.1" y="725.84" font-size="15.2" fill="#eeeeee" textLength="35.2" lengthAdjust="spacingAndGlyphs">0,33</text>
<text x="840" y="725.84" font-size="15.2" fill="#eeeeee" textLength="35.2" lengthAdjust="spacingAndGlyphs">0,25</text>
<text x="896.5" y="725.84" font-size="15.2" fill="#eeeeee" textLength="35.2" lengthAdjust="spacingAndGlyphs">0,37</text>
<text x="980.4" y="725.84" font-size="15.2" fill="#eeeeee" textLength="35.2" lengthAdjust="spacingAndGlyphs">0,36</text>
<text x="1066.1" y="725.84" font-size="15.2" fill="#eeeeee" textLength="35.2" lengthAdjust="spacingAndGlyphs">0,26</text>
<text x="1142.3" y="725.84" font-size="15.2" fill="#eeeeee" textLength="35.2" lengthAdjust="spacingAndGlyphs">0,45</text>
<text x="1208.2" y="725.84" font-size="15.2" fill="#eeeeee" textLength="35.2" lengthAdjust="spacingAndGlyphs">0,25</text>
<text x="1311.7" y="725.84" font-size="15.2" fill="#eeeeee" textLength="35.2" lengthAdjust="spacingAndGlyphs">0,37</text>
<text x="1422.8" y="725.84" font-size="15.2" fill="#eeeeee" textLength="35.2" lengthAdjust="spacingAndGlyphs">0,42</text>
<text x="1490.8" y="725.84" font-size="15.2" fill="#eeeeee" textLength="35.2" lengthAdjust="spacingAndGlyphs">0,18</text>
<text x="1604.4" y="725.84" font-size="15.2" fill="#eeeeee" textLength="35.2" lengthAdjust="spacingAndGlyphs">0,31</text>
<rect x="324.5" y="731.2" width="1343.5" height="23.3" fill="url(#gRowD)"/>
<text x="338.9" y="748.98" font-size="15.2" fill="#f6f6f6" font-weight="bold" textLength="11" lengthAdjust="spacingAndGlyphs">Y</text>
<text x="489.8" y="748.98" font-size="15.2" fill="#f6f6f6" textLength="53.98" lengthAdjust="spacingAndGlyphs">112,62</text>
<text x="556.6" y="748.98" font-size="15.2" fill="#f6f6f6" textLength="45.26" lengthAdjust="spacingAndGlyphs">89,74</text>
<text x="627.4" y="748.98" font-size="15.2" fill="#f6f6f6" textLength="45.26" lengthAdjust="spacingAndGlyphs">72,71</text>
<text x="698.3" y="748.98" font-size="15.2" fill="#f6f6f6" textLength="45.26" lengthAdjust="spacingAndGlyphs">56,66</text>
<text x="769.1" y="748.98" font-size="15.2" fill="#f6f6f6" textLength="45.26" lengthAdjust="spacingAndGlyphs">39,23</text>
<text x="840" y="748.98" font-size="15.2" fill="#f6f6f6" textLength="35.2" lengthAdjust="spacingAndGlyphs">0,17</text>
<text x="896.5" y="748.98" font-size="15.2" fill="#f6f6f6" textLength="45.26" lengthAdjust="spacingAndGlyphs">10,92</text>
<text x="980.4" y="748.98" font-size="15.2" fill="#f6f6f6" textLength="45.26" lengthAdjust="spacingAndGlyphs">40,16</text>
<text x="1066.1" y="748.98" font-size="15.2" fill="#f6f6f6" textLength="45.26" lengthAdjust="spacingAndGlyphs">20,85</text>
<text x="1142.3" y="748.98" font-size="15.2" fill="#f6f6f6" textLength="45.26" lengthAdjust="spacingAndGlyphs">14,61</text>
<text x="1208.2" y="748.98" font-size="15.2" fill="#f6f6f6" textLength="45.26" lengthAdjust="spacingAndGlyphs">26,07</text>
<text x="1311.7" y="748.98" font-size="15.2" fill="#f6f6f6" textLength="45.26" lengthAdjust="spacingAndGlyphs">48,33</text>
<text x="1422.8" y="748.98" font-size="15.2" fill="#f6f6f6" textLength="45.26" lengthAdjust="spacingAndGlyphs">32,56</text>
<text x="1490.8" y="748.98" font-size="15.2" fill="#f6f6f6" textLength="45.26" lengthAdjust="spacingAndGlyphs">12,39</text>
<text x="1604.4" y="748.98" font-size="15.2" fill="#f6f6f6" textLength="45.26" lengthAdjust="spacingAndGlyphs">20,81</text>
<rect x="324.5" y="754.5" width="1343.5" height="23.3" fill="url(#gRowL)"/>
<text x="338.9" y="772.12" font-size="15.2" fill="#eeeeee" font-weight="bold" textLength="129.2" lengthAdjust="spacingAndGlyphs">Target x:CIE31</text>
<text x="489.8" y="772.12" font-size="15.2" fill="#eeeeee" textLength="35.2" lengthAdjust="spacingAndGlyphs">0,31</text>
<text x="556.6" y="772.12" font-size="15.2" fill="#eeeeee" textLength="35.2" lengthAdjust="spacingAndGlyphs">0,31</text>
<text x="627.4" y="772.12" font-size="15.2" fill="#eeeeee" textLength="35.2" lengthAdjust="spacingAndGlyphs">0,31</text>
<text x="698.3" y="772.12" font-size="15.2" fill="#eeeeee" textLength="35.2" lengthAdjust="spacingAndGlyphs">0,31</text>
<text x="769.1" y="772.12" font-size="15.2" fill="#eeeeee" textLength="35.2" lengthAdjust="spacingAndGlyphs">0,31</text>
<text x="840" y="772.12" font-size="15.2" fill="#eeeeee" textLength="35.2" lengthAdjust="spacingAndGlyphs">0,31</text>
<text x="896.5" y="772.12" font-size="15.2" fill="#eeeeee" textLength="35.2" lengthAdjust="spacingAndGlyphs">0,40</text>
<text x="980.4" y="772.12" font-size="15.2" fill="#eeeeee" textLength="35.2" lengthAdjust="spacingAndGlyphs">0,38</text>
<text x="1066.1" y="772.12" font-size="15.2" fill="#eeeeee" textLength="35.2" lengthAdjust="spacingAndGlyphs">0,25</text>
<text x="1142.3" y="772.12" font-size="15.2" fill="#eeeeee" textLength="35.2" lengthAdjust="spacingAndGlyphs">0,34</text>
<text x="1208.2" y="772.12" font-size="15.2" fill="#eeeeee" textLength="35.2" lengthAdjust="spacingAndGlyphs">0,27</text>
<text x="1311.7" y="772.12" font-size="15.2" fill="#eeeeee" textLength="35.2" lengthAdjust="spacingAndGlyphs">0,26</text>
<text x="1422.8" y="772.12" font-size="15.2" fill="#eeeeee" textLength="35.2" lengthAdjust="spacingAndGlyphs">0,51</text>
<text x="1490.8" y="772.12" font-size="15.2" fill="#eeeeee" textLength="35.2" lengthAdjust="spacingAndGlyphs">0,22</text>
<text x="1604.4" y="772.12" font-size="15.2" fill="#eeeeee" textLength="35.2" lengthAdjust="spacingAndGlyphs">0,46</text>
<rect x="324.5" y="777.8" width="1343.5" height="23.3" fill="url(#gRowD)"/>
<text x="338.9" y="795.26" font-size="15.2" fill="#f6f6f6" font-weight="bold" textLength="129.2" lengthAdjust="spacingAndGlyphs">Target y:CIE31</text>
<text x="489.8" y="795.26" font-size="15.2" fill="#f6f6f6" textLength="35.2" lengthAdjust="spacingAndGlyphs">0,33</text>
<text x="556.6" y="795.26" font-size="15.2" fill="#f6f6f6" textLength="35.2" lengthAdjust="spacingAndGlyphs">0,33</text>
<text x="627.4" y="795.26" font-size="15.2" fill="#f6f6f6" textLength="35.2" lengthAdjust="spacingAndGlyphs">0,33</text>
<text x="698.3" y="795.26" font-size="15.2" fill="#f6f6f6" textLength="35.2" lengthAdjust="spacingAndGlyphs">0,33</text>
<text x="769.1" y="795.26" font-size="15.2" fill="#f6f6f6" textLength="35.2" lengthAdjust="spacingAndGlyphs">0,33</text>
<text x="840" y="795.26" font-size="15.2" fill="#f6f6f6" textLength="35.2" lengthAdjust="spacingAndGlyphs">0,33</text>
<text x="896.5" y="795.26" font-size="15.2" fill="#f6f6f6" textLength="35.2" lengthAdjust="spacingAndGlyphs">0,36</text>
<text x="980.4" y="795.26" font-size="15.2" fill="#f6f6f6" textLength="35.2" lengthAdjust="spacingAndGlyphs">0,36</text>
<text x="1066.1" y="795.26" font-size="15.2" fill="#f6f6f6" textLength="35.2" lengthAdjust="spacingAndGlyphs">0,27</text>
<text x="1142.3" y="795.26" font-size="15.2" fill="#f6f6f6" textLength="35.2" lengthAdjust="spacingAndGlyphs">0,43</text>
<text x="1208.2" y="795.26" font-size="15.2" fill="#f6f6f6" textLength="35.2" lengthAdjust="spacingAndGlyphs">0,25</text>
<text x="1311.7" y="795.26" font-size="15.2" fill="#f6f6f6" textLength="35.2" lengthAdjust="spacingAndGlyphs">0,36</text>
<text x="1422.8" y="795.26" font-size="15.2" fill="#f6f6f6" textLength="35.2" lengthAdjust="spacingAndGlyphs">0,41</text>
<text x="1490.8" y="795.26" font-size="15.2" fill="#f6f6f6" textLength="35.2" lengthAdjust="spacingAndGlyphs">0,19</text>
<text x="1604.4" y="795.26" font-size="15.2" fill="#f6f6f6" textLength="35.2" lengthAdjust="spacingAndGlyphs">0,31</text>
<rect x="324.5" y="801.1" width="1343.5" height="23.3" fill="url(#gRowL)"/>
<text x="338.9" y="818.4" font-size="15.2" fill="#eeeeee" font-weight="bold" textLength="75.5" lengthAdjust="spacingAndGlyphs">Target Y</text>
<text x="489.8" y="818.4" font-size="15.2" fill="#eeeeee" textLength="53.98" lengthAdjust="spacingAndGlyphs">112,62</text>
<text x="556.6" y="818.4" font-size="15.2" fill="#eeeeee" textLength="43.92" lengthAdjust="spacingAndGlyphs">89,11</text>
<text x="627.4" y="818.4" font-size="15.2" fill="#eeeeee" textLength="45.26" lengthAdjust="spacingAndGlyphs">71,80</text>
<text x="698.3" y="818.4" font-size="15.2" fill="#eeeeee" textLength="45.26" lengthAdjust="spacingAndGlyphs">55,30</text>
<text x="769.1" y="818.4" font-size="15.2" fill="#eeeeee" textLength="45.26" lengthAdjust="spacingAndGlyphs">38,51</text>
<text x="840" y="818.4" font-size="15.2" fill="#eeeeee" textLength="35.2" lengthAdjust="spacingAndGlyphs">0,00</text>
<text x="896.5" y="818.4" font-size="15.2" fill="#eeeeee" textLength="43.92" lengthAdjust="spacingAndGlyphs">11,34</text>
<text x="980.4" y="818.4" font-size="15.2" fill="#eeeeee" textLength="45.26" lengthAdjust="spacingAndGlyphs">39,30</text>
<text x="1066.1" y="818.4" font-size="15.2" fill="#eeeeee" textLength="45.26" lengthAdjust="spacingAndGlyphs">21,06</text>
<text x="1142.3" y="818.4" font-size="15.2" fill="#eeeeee" textLength="45.26" lengthAdjust="spacingAndGlyphs">14,68</text>
<text x="1208.2" y="818.4" font-size="15.2" fill="#eeeeee" textLength="45.26" lengthAdjust="spacingAndGlyphs">26,26</text>
<text x="1311.7" y="818.4" font-size="15.2" fill="#eeeeee" textLength="45.26" lengthAdjust="spacingAndGlyphs">47,16</text>
<text x="1422.8" y="818.4" font-size="15.2" fill="#eeeeee" textLength="45.26" lengthAdjust="spacingAndGlyphs">31,92</text>
<text x="1490.8" y="818.4" font-size="15.2" fill="#eeeeee" textLength="45.26" lengthAdjust="spacingAndGlyphs">13,24</text>
<text x="1604.4" y="818.4" font-size="15.2" fill="#eeeeee" textLength="45.26" lengthAdjust="spacingAndGlyphs">21,03</text>
<rect x="324.5" y="824.4" width="1343.5" height="23.3" fill="url(#gRowD)"/>
<text x="338.9" y="841.54" font-size="15.2" fill="#f6f6f6" font-weight="bold" textLength="74.5" lengthAdjust="spacingAndGlyphs">ΔE 2000</text>
<text x="489.8" y="841.54" font-size="15.2" fill="#f6f6f6" textLength="35.2" lengthAdjust="spacingAndGlyphs">2,72</text>
<text x="556.6" y="841.54" font-size="15.2" fill="#f6f6f6" textLength="35.2" lengthAdjust="spacingAndGlyphs">2,52</text>
<text x="627.4" y="841.54" font-size="15.2" fill="#f6f6f6" textLength="35.2" lengthAdjust="spacingAndGlyphs">2,63</text>
<text x="698.3" y="841.54" font-size="15.2" fill="#f6f6f6" textLength="35.2" lengthAdjust="spacingAndGlyphs">2,74</text>
<text x="769.1" y="841.54" font-size="15.2" fill="#f6f6f6" textLength="35.2" lengthAdjust="spacingAndGlyphs">2,20</text>
<text x="840" y="841.54" font-size="15.2" fill="#f6f6f6" textLength="35.2" lengthAdjust="spacingAndGlyphs">2,15</text>
<text x="896.5" y="841.54" font-size="15.2" fill="#f6f6f6" textLength="35.2" lengthAdjust="spacingAndGlyphs">1,89</text>
<text x="980.4" y="841.54" font-size="15.2" fill="#f6f6f6" textLength="35.2" lengthAdjust="spacingAndGlyphs">2,49</text>
<text x="1066.1" y="841.54" font-size="15.2" fill="#f6f6f6" textLength="35.2" lengthAdjust="spacingAndGlyphs">0,74</text>
<text x="1142.3" y="841.54" font-size="15.2" fill="#f6f6f6" textLength="35.2" lengthAdjust="spacingAndGlyphs">2,89</text>
<text x="1208.2" y="841.54" font-size="15.2" fill="#f6f6f6" textLength="35.2" lengthAdjust="spacingAndGlyphs">0,92</text>
<text x="1311.7" y="841.54" font-size="15.2" fill="#f6f6f6" textLength="35.2" lengthAdjust="spacingAndGlyphs">2,75</text>
<text x="1422.8" y="841.54" font-size="15.2" fill="#f6f6f6" textLength="35.2" lengthAdjust="spacingAndGlyphs">4,51</text>
<text x="1490.8" y="841.54" font-size="15.2" fill="#f6f6f6" textLength="35.2" lengthAdjust="spacingAndGlyphs">1,89</text>
<text x="1604.4" y="841.54" font-size="15.2" fill="#f6f6f6" textLength="35.2" lengthAdjust="spacingAndGlyphs">1,46</text>
<rect x="324.5" y="847.7" width="1343.5" height="23.3" fill="url(#gRowL)"/>
<text x="338.9" y="864.68" font-size="15.2" fill="#eeeeee" font-weight="bold" textLength="59" lengthAdjust="spacingAndGlyphs">ΔE ITP</text>
<text x="489.8" y="864.68" font-size="15.2" fill="#eeeeee" textLength="35.2" lengthAdjust="spacingAndGlyphs">1,55</text>
<text x="556.6" y="864.68" font-size="15.2" fill="#eeeeee" textLength="35.2" lengthAdjust="spacingAndGlyphs">1,57</text>
<text x="627.4" y="864.68" font-size="15.2" fill="#eeeeee" textLength="35.2" lengthAdjust="spacingAndGlyphs">1,84</text>
<text x="698.3" y="864.68" font-size="15.2" fill="#eeeeee" textLength="35.2" lengthAdjust="spacingAndGlyphs">2,41</text>
<text x="769.1" y="864.68" font-size="15.2" fill="#eeeeee" textLength="35.2" lengthAdjust="spacingAndGlyphs">1,97</text>
<text x="840" y="864.68" font-size="15.2" fill="#eeeeee" textLength="45.26" lengthAdjust="spacingAndGlyphs">56,85</text>
<text x="896.5" y="864.68" font-size="15.2" fill="#eeeeee" textLength="35.2" lengthAdjust="spacingAndGlyphs">6,75</text>
<text x="980.4" y="864.68" font-size="15.2" fill="#eeeeee" textLength="35.2" lengthAdjust="spacingAndGlyphs">3,78</text>
<text x="1066.1" y="864.68" font-size="15.2" fill="#eeeeee" textLength="35.2" lengthAdjust="spacingAndGlyphs">2,49</text>
<text x="1142.3" y="864.68" font-size="15.2" fill="#eeeeee" textLength="35.2" lengthAdjust="spacingAndGlyphs">8,51</text>
<text x="1208.2" y="864.68" font-size="15.2" fill="#eeeeee" textLength="35.2" lengthAdjust="spacingAndGlyphs">1,80</text>
<text x="1311.7" y="864.68" font-size="15.2" fill="#eeeeee" textLength="35.2" lengthAdjust="spacingAndGlyphs">5,70</text>
<text x="1422.8" y="864.68" font-size="15.2" fill="#eeeeee" textLength="45.26" lengthAdjust="spacingAndGlyphs">16,33</text>
<text x="1490.8" y="864.68" font-size="15.2" fill="#eeeeee" textLength="35.2" lengthAdjust="spacingAndGlyphs">6,09</text>
<text x="1604.4" y="864.68" font-size="15.2" fill="#eeeeee" textLength="35.2" lengthAdjust="spacingAndGlyphs">9,71</text>
</g>
<rect x="324.5" y="871" width="1343.5" height="14.2" fill="#666"/>
<rect x="325.6" y="872" width="12.8" height="12.6" fill="#787878" stroke="#989898" stroke-width="0.8" rx="2"/>
<path d="M334.4 873.3 V883.3 L330 878.3Z" fill="#3c3c3c"/>
<rect x="1651" y="872" width="13.8" height="12.6" fill="#787878" stroke="#989898" stroke-width="0.8" rx="2"/>
<path d="M1655.8 873.3 V883.3 L1660.2 878.3Z" fill="#3c3c3c"/>
<rect x="344.5" y="872.3" width="650" height="11.9" fill="#444" rx="6"/>
<clipPath id="cBt"><rect x="2" y="926" width="1264.5" height="78"/></clipPath>
<rect x="2" y="988.2" width="1264.5" height="15.8" fill="#626262"/>
<rect x="4.1" y="990" width="11.5" height="12.8" fill="#787878" stroke="#989898" stroke-width="0.8" rx="2"/>
<path d="M12 991.7 V1002 L7.6 996.9Z" fill="#3c3c3c"/>
<rect x="1252.6" y="990" width="12.6" height="12.8" fill="#787878" stroke="#989898" stroke-width="0.8" rx="2"/>
<path d="M1256.8 991.7 V1002 L1261.2 996.9Z" fill="#3c3c3c"/>
<rect x="452" y="990.2" width="796" height="12.4" fill="#444" rx="6.2"/>
<g clip-path="url(#cBt)">
<rect x="-31.1" y="927.7" width="62" height="60.5" fill="url(#gBtn)" rx="4.5"/>
<path d="M-30.6 982.2 V932.2 Q-30.6 928.2 -26.6 928.2 H26.4" fill="none" stroke="#b8b8b8" stroke-width="0.9" opacity="0.7"/>
<rect x="-24.7" y="934.1" width="49.8" height="14.8" fill="#8c84d0" rx="4.2"/>
<path d="M-24.2 945.9 V938.6 Q-24.2 934.6 -20.2 934.6 H20.9" fill="none" stroke="#000" stroke-width="1" opacity="0.28"/>
<text x="-21" y="967.5" font-size="12.4" fill="#2c2c2c" font-weight="bold" textLength="27.5" lengthAdjust="spacingAndGlyphs">Blue</text>
<text x="-21" y="982.8" font-size="12.4" fill="#2c2c2c" font-weight="bold" textLength="41" lengthAdjust="spacingAndGlyphs">Flower</text>
<rect x="33.9" y="927.7" width="62" height="60.5" fill="url(#gBtn)" rx="4.5"/>
<path d="M34.4 982.2 V932.2 Q34.4 928.2 38.4 928.2 H91.4" fill="none" stroke="#b8b8b8" stroke-width="0.9" opacity="0.7"/>
<rect x="40.3" y="934.1" width="49.8" height="14.8" fill="#64c8b0" rx="4.2"/>
<path d="M40.8 945.9 V938.6 Q40.8 934.6 44.8 934.6 H85.9" fill="none" stroke="#000" stroke-width="1" opacity="0.28"/>
<text x="46.4" y="967.5" font-size="12.4" fill="#2c2c2c" font-weight="bold" textLength="36.6" lengthAdjust="spacingAndGlyphs">Bluish</text>
<text x="46.4" y="982.8" font-size="12.4" fill="#2c2c2c" font-weight="bold" textLength="36.6" lengthAdjust="spacingAndGlyphs">Green</text>
<rect x="98.9" y="927.7" width="62" height="60.5" fill="url(#gBtn)" rx="4.5"/>
<path d="M99.4 982.2 V932.2 Q99.4 928.2 103.4 928.2 H156.4" fill="none" stroke="#b8b8b8" stroke-width="0.9" opacity="0.7"/>
<rect x="105.3" y="934.1" width="49.8" height="29.9" fill="#dc7828" rx="4.2"/>
<path d="M105.8 961 V938.6 Q105.8 934.6 109.8 934.6 H150.9" fill="none" stroke="#000" stroke-width="1" opacity="0.28"/>
<text x="108" y="982.8" font-size="12.4" fill="#2c2c2c" font-weight="bold" textLength="43.9" lengthAdjust="spacingAndGlyphs">Orange</text>
<rect x="163.9" y="927.7" width="62" height="60.5" fill="url(#gBtn)" rx="4.5"/>
<path d="M164.4 982.2 V932.2 Q164.4 928.2 168.4 928.2 H221.4" fill="none" stroke="#b8b8b8" stroke-width="0.9" opacity="0.7"/>
<rect x="170.3" y="934.1" width="49.8" height="14.8" fill="#4858b0" rx="4.2"/>
<path d="M170.8 945.9 V938.6 Q170.8 934.6 174.8 934.6 H215.9" fill="none" stroke="#000" stroke-width="1" opacity="0.28"/>
<text x="169.8" y="967.5" font-size="12.4" fill="#2c2c2c" font-weight="bold" textLength="49.6" lengthAdjust="spacingAndGlyphs">Purplish</text>
<text x="169.8" y="982.8" font-size="12.4" fill="#2c2c2c" font-weight="bold" textLength="26.6" lengthAdjust="spacingAndGlyphs">Blue</text>
<rect x="228.9" y="927.7" width="62" height="60.5" fill="url(#gBtn)" rx="4.5"/>
<path d="M229.4 982.2 V932.2 Q229.4 928.2 233.4 928.2 H286.4" fill="none" stroke="#b8b8b8" stroke-width="0.9" opacity="0.7"/>
<rect x="235.3" y="934.1" width="49.8" height="14.8" fill="#d05064" rx="4.2"/>
<path d="M235.8 945.9 V938.6 Q235.8 934.6 239.8 934.6 H280.9" fill="none" stroke="#000" stroke-width="1" opacity="0.28"/>
<text x="229.4" y="967.5" font-size="12.4" fill="#2c2c2c" font-weight="bold" textLength="60.3" lengthAdjust="spacingAndGlyphs">Moderate</text>
<text x="229.4" y="982.8" font-size="12.4" fill="#2c2c2c" font-weight="bold" textLength="22.6" lengthAdjust="spacingAndGlyphs">Red</text>
<rect x="293.9" y="927.7" width="62" height="60.5" fill="url(#gBtn)" rx="4.5"/>
<path d="M294.4 982.2 V932.2 Q294.4 928.2 298.4 928.2 H351.4" fill="none" stroke="#b8b8b8" stroke-width="0.9" opacity="0.7"/>
<rect x="300.3" y="934.1" width="49.8" height="29.9" fill="#643f78" rx="4.2"/>
<path d="M300.8 961 V938.6 Q300.8 934.6 304.8 934.6 H345.9" fill="none" stroke="#000" stroke-width="1" opacity="0.28"/>
<text x="304.7" y="982.8" font-size="12.4" fill="#2c2c2c" font-weight="bold" textLength="40.3" lengthAdjust="spacingAndGlyphs">Purple</text>
<rect x="358.9" y="927.7" width="62" height="60.5" fill="url(#gBtn)" rx="4.5"/>
<path d="M359.4 982.2 V932.2 Q359.4 928.2 363.4 928.2 H416.4" fill="none" stroke="#b8b8b8" stroke-width="0.9" opacity="0.7"/>
<rect x="365.3" y="934.1" width="49.8" height="14.8" fill="#a4c440" rx="4.2"/>
<path d="M365.8 945.9 V938.6 Q365.8 934.6 369.8 934.6 H410.9" fill="none" stroke="#000" stroke-width="1" opacity="0.28"/>
<text x="369.9" y="967.5" font-size="12.4" fill="#2c2c2c" font-weight="bold" textLength="40.2" lengthAdjust="spacingAndGlyphs">Yellow</text>
<text x="369.9" y="982.8" font-size="12.4" fill="#2c2c2c" font-weight="bold" textLength="37.1" lengthAdjust="spacingAndGlyphs">Green</text>
<rect x="423.9" y="927.7" width="62" height="60.5" fill="url(#gBtn)" rx="4.5"/>
<path d="M424.4 982.2 V932.2 Q424.4 928.2 428.4 928.2 H481.4" fill="none" stroke="#b8b8b8" stroke-width="0.9" opacity="0.7"/>
<rect x="430.3" y="934.1" width="49.8" height="14.8" fill="#f0a830" rx="4.2"/>
<path d="M430.8 945.9 V938.6 Q430.8 934.6 434.8 934.6 H475.9" fill="none" stroke="#000" stroke-width="1" opacity="0.28"/>
<text x="432.4" y="967.5" font-size="12.4" fill="#2c2c2c" font-weight="bold" textLength="44.8" lengthAdjust="spacingAndGlyphs">Orange</text>
<text x="432.4" y="982.8" font-size="12.4" fill="#2c2c2c" font-weight="bold" textLength="40.2" lengthAdjust="spacingAndGlyphs">Yellow</text>
<rect x="488.9" y="927.7" width="62" height="60.5" fill="url(#gBtn)" rx="4.5"/>
<path d="M489.4 982.2 V932.2 Q489.4 928.2 493.4 928.2 H546.4" fill="none" stroke="#b8b8b8" stroke-width="0.9" opacity="0.7"/>
<rect x="495.3" y="934.1" width="49.8" height="29.9" fill="#303ca0" rx="4.2"/>
<path d="M495.8 961 V938.6 Q495.8 934.6 499.8 934.6 H540.9" fill="none" stroke="#000" stroke-width="1" opacity="0.28"/>
<text x="505.9" y="982.8" font-size="12.4" fill="#2c2c2c" font-weight="bold" textLength="27.6" lengthAdjust="spacingAndGlyphs">Blue</text>
<rect x="553.9" y="927.7" width="62" height="60.5" fill="url(#gBtn)" rx="4.5"/>
<path d="M554.4 982.2 V932.2 Q554.4 928.2 558.4 928.2 H611.4" fill="none" stroke="#b8b8b8" stroke-width="0.9" opacity="0.7"/>
<rect x="560.3" y="934.1" width="49.8" height="29.9" fill="#48a04c" rx="4.2"/>
<path d="M560.8 961 V938.6 Q560.8 934.6 564.8 934.6 H605.9" fill="none" stroke="#000" stroke-width="1" opacity="0.28"/>
<text x="566.1" y="982.8" font-size="12.4" fill="#2c2c2c" font-weight="bold" textLength="37.2" lengthAdjust="spacingAndGlyphs">Green</text>
<rect x="618.9" y="927.7" width="62" height="60.5" fill="url(#gBtn)" rx="4.5"/>
<path d="M619.4 982.2 V932.2 Q619.4 928.2 623.4 928.2 H676.4" fill="none" stroke="#b8b8b8" stroke-width="0.9" opacity="0.7"/>
<rect x="625.3" y="934.1" width="49.8" height="29.9" fill="#b83038" rx="4.2"/>
<path d="M625.8 961 V938.6 Q625.8 934.6 629.8 934.6 H670.9" fill="none" stroke="#000" stroke-width="1" opacity="0.28"/>
<text x="638.3" y="982.8" font-size="12.4" fill="#2c2c2c" font-weight="bold" textLength="22.6" lengthAdjust="spacingAndGlyphs">Red</text>
<rect x="683.9" y="927.7" width="62" height="60.5" fill="url(#gBtn)" rx="4.5"/>
<path d="M684.4 982.2 V932.2 Q684.4 928.2 688.4 928.2 H741.4" fill="none" stroke="#b8b8b8" stroke-width="0.9" opacity="0.7"/>
<rect x="690.3" y="934.1" width="49.8" height="29.9" fill="#f0cc28" rx="4.2"/>
<path d="M690.8 961 V938.6 Q690.8 934.6 694.8 934.6 H735.9" fill="none" stroke="#000" stroke-width="1" opacity="0.28"/>
<text x="694.7" y="982.8" font-size="12.4" fill="#2c2c2c" font-weight="bold" textLength="39.7" lengthAdjust="spacingAndGlyphs">Yellow</text>
<rect x="748.9" y="927.7" width="62" height="60.5" fill="url(#gBtn)" rx="4.5"/>
<path d="M749.4 982.2 V932.2 Q749.4 928.2 753.4 928.2 H806.4" fill="none" stroke="#b8b8b8" stroke-width="0.9" opacity="0.7"/>
<rect x="755.3" y="934.1" width="49.8" height="29.9" fill="#c0589c" rx="4.2"/>
<path d="M755.8 961 V938.6 Q755.8 934.6 759.8 934.6 H800.9" fill="none" stroke="#000" stroke-width="1" opacity="0.28"/>
<text x="752.7" y="982.8" font-size="12.4" fill="#2c2c2c" font-weight="bold" textLength="54.1" lengthAdjust="spacingAndGlyphs">Magenta</text>
<rect x="813.9" y="927.7" width="62" height="60.5" fill="url(#gBtn)" rx="4.5"/>
<path d="M814.4 982.2 V932.2 Q814.4 928.2 818.4 928.2 H871.4" fill="none" stroke="#b8b8b8" stroke-width="0.9" opacity="0.7"/>
<rect x="820.3" y="934.1" width="49.8" height="29.9" fill="#0088a8" rx="4.2"/>
<path d="M820.8 961 V938.6 Q820.8 934.6 824.8 934.6 H865.9" fill="none" stroke="#000" stroke-width="1" opacity="0.28"/>
<text x="830.2" y="982.8" font-size="12.4" fill="#2c2c2c" font-weight="bold" textLength="28.4" lengthAdjust="spacingAndGlyphs">Cyan</text>
<rect x="878.9" y="927.7" width="62" height="60.5" fill="url(#gBtn)" rx="4.5"/>
<path d="M879.4 982.2 V932.2 Q879.4 928.2 883.4 928.2 H936.4" fill="none" stroke="#b8b8b8" stroke-width="0.9" opacity="0.7"/>
<rect x="885.3" y="934.1" width="49.8" height="29.9" fill="#ff0000" rx="4.2"/>
<path d="M885.8 961 V938.6 Q885.8 934.6 889.8 934.6 H930.9" fill="none" stroke="#000" stroke-width="1" opacity="0.28"/>
<text x="880" y="982.8" font-size="12.4" fill="#2c2c2c" font-weight="bold" textLength="59.2" lengthAdjust="spacingAndGlyphs">100% Red</text>
<rect x="943.9" y="927.7" width="62" height="60.5" fill="url(#gBtn)" rx="4.5"/>
<path d="M944.4 982.2 V932.2 Q944.4 928.2 948.4 928.2 H1001.4" fill="none" stroke="#b8b8b8" stroke-width="0.9" opacity="0.7"/>
<rect x="950.3" y="934.1" width="49.8" height="14.8" fill="#00ff00" rx="4.2"/>
<path d="M950.8 945.9 V938.6 Q950.8 934.6 954.8 934.6 H995.9" fill="none" stroke="#000" stroke-width="1" opacity="0.28"/>
<text x="956.7" y="967.5" font-size="12.4" fill="#2c2c2c" font-weight="bold" textLength="32.3" lengthAdjust="spacingAndGlyphs">100%</text>
<text x="956.7" y="982.8" font-size="12.4" fill="#2c2c2c" font-weight="bold" textLength="36.2" lengthAdjust="spacingAndGlyphs">Green</text>
<rect x="1008.9" y="927.7" width="62" height="60.5" fill="url(#gBtn)" rx="4.5"/>
<path d="M1009.4 982.2 V932.2 Q1009.4 928.2 1013.4 928.2 H1066.4" fill="none" stroke="#b8b8b8" stroke-width="0.9" opacity="0.7"/>
<rect x="1015.3" y="934.1" width="49.8" height="14.8" fill="#0000ff" rx="4.2"/>
<path d="M1015.8 945.9 V938.6 Q1015.8 934.6 1019.8 934.6 H1060.9" fill="none" stroke="#000" stroke-width="1" opacity="0.28"/>
<text x="1023.7" y="967.5" font-size="12.4" fill="#2c2c2c" font-weight="bold" textLength="32.3" lengthAdjust="spacingAndGlyphs">100%</text>
<text x="1023.7" y="982.8" font-size="12.4" fill="#2c2c2c" font-weight="bold" textLength="25.7" lengthAdjust="spacingAndGlyphs">Blue</text>
<rect x="1073.9" y="927.7" width="62" height="60.5" fill="url(#gBtn)" rx="4.5"/>
<path d="M1074.4 982.2 V932.2 Q1074.4 928.2 1078.4 928.2 H1131.4" fill="none" stroke="#b8b8b8" stroke-width="0.9" opacity="0.7"/>
<rect x="1080.3" y="934.1" width="49.8" height="14.8" fill="#00ffff" rx="4.2"/>
<path d="M1080.8 945.9 V938.6 Q1080.8 934.6 1084.8 934.6 H1125.9" fill="none" stroke="#000" stroke-width="1" opacity="0.28"/>
<text x="1088.3" y="967.5" font-size="12.4" fill="#2c2c2c" font-weight="bold" textLength="32.3" lengthAdjust="spacingAndGlyphs">100%</text>
<text x="1088.3" y="982.8" font-size="12.4" fill="#2c2c2c" font-weight="bold" textLength="28.8" lengthAdjust="spacingAndGlyphs">Cyan</text>
<rect x="1138.9" y="927.7" width="62" height="60.5" fill="url(#gBtn)" rx="4.5"/>
<path d="M1139.4 982.2 V932.2 Q1139.4 928.2 1143.4 928.2 H1196.4" fill="none" stroke="#b8b8b8" stroke-width="0.9" opacity="0.7"/>
<rect x="1145.3" y="934.1" width="49.8" height="14.8" fill="#ff00ff" rx="4.2"/>
<path d="M1145.8 945.9 V938.6 Q1145.8 934.6 1149.8 934.6 H1190.9" fill="none" stroke="#000" stroke-width="1" opacity="0.28"/>
<text x="1142.8" y="967.5" font-size="12.4" fill="#2c2c2c" font-weight="bold" textLength="32.3" lengthAdjust="spacingAndGlyphs">100%</text>
<text x="1142.8" y="982.8" font-size="12.4" fill="#2c2c2c" font-weight="bold" textLength="54.1" lengthAdjust="spacingAndGlyphs">Magenta</text>
<rect x="1203.9" y="927.7" width="62" height="60.5" fill="url(#gBtnSel)" rx="4.5"/>
<rect x="1210.3" y="934.1" width="49.8" height="14.8" fill="#ffff00" rx="4.2"/>
<path d="M1210.8 945.9 V938.6 Q1210.8 934.6 1214.8 934.6 H1255.9" fill="none" stroke="#000" stroke-width="1" opacity="0.28"/>
<text x="1214.8" y="967.5" font-size="12.4" fill="#fff" font-weight="bold" textLength="32.7" lengthAdjust="spacingAndGlyphs">100%</text>
<text x="1214.8" y="982.8" font-size="12.4" fill="#fff" font-weight="bold" textLength="40.5" lengthAdjust="spacingAndGlyphs">Yellow</text>
</g>
<path d="M1267.2 950.4 V931.3 Q1267.2 927.3 1271.2 927.3 H1323.2 Q1327.2 927.3 1327.2 931.3 V950.4Z" fill="url(#gUp)"/>
<rect x="1267.2" y="951.2" width="60" height="52.8" fill="url(#gStopBg)"/>
<line x1="1267.2" y1="950.8" x2="1327.2" y2="950.8" stroke="#4a4a4a" stroke-width="1"/>
<circle cx="1297.5" cy="938.9" r="9.4" fill="url(#gCirc)"/>
<path d="M1291.4 940.9 L1297.4 935.5 L1303.4 940.9Z" fill="#333"/>
<rect x="1279" y="959.2" width="36.2" height="36" fill="url(#gStopFr)" stroke="#242424" stroke-width="3" rx="5"/>
<rect x="1289" y="968.6" width="16.8" height="17.4" fill="#000"/>
<rect x="1328.5" y="927" width="57.5" height="37.8" fill="url(#gCtl)"/>
<circle cx="1357.25" cy="946.2" r="11.8" fill="url(#gCirc)"/>
<rect x="1353.05" y="942" width="8.4" height="8.4" fill="#333"/>
<rect x="1386" y="927" width="56.4" height="37.8" fill="url(#gCtl)"/>
<line x1="1386" y1="927" x2="1386" y2="964.8" stroke="#4c4c4c" stroke-width="1"/>
<circle cx="1414.2" cy="946.2" r="11.8" fill="url(#gCirc)"/>
<path d="M1410.8 940.8 V951.6 L1419.8 946.2Z" fill="#333"/>
<rect x="1442.4" y="927" width="56.1" height="37.8" fill="url(#gCtlD)"/>
<line x1="1442.4" y1="927" x2="1442.4" y2="964.8" stroke="#4c4c4c" stroke-width="1"/>
<circle cx="1470.45" cy="946.2" r="11.8" fill="url(#gCircD)"/>
<path d="M1466.65 940.2 h-3 v12 h3 M1474.25 940.2 h3 v12 h-3 M1467.95 946.2 h5" fill="none" stroke="#2c2c2c" stroke-width="1.7"/>
<rect x="1498.5" y="927" width="56.5" height="37.8" fill="url(#gCtl)"/>
<line x1="1498.5" y1="927" x2="1498.5" y2="964.8" stroke="#4c4c4c" stroke-width="1"/>
<circle cx="1526.75" cy="946.2" r="11.8" fill="url(#gCirc)"/>
<path d="M1526.75 946.2 c-2.4 -4 -7 -3.4 -7 0 s4.6 4 7 0 s7 -3.4 7 0 s-4.6 4 -7 0Z" fill="none" stroke="#333" stroke-width="1.6"/>
<rect x="1555" y="927" width="56.7" height="37.8" fill="url(#gCtlDD)"/>
<line x1="1555" y1="927" x2="1555" y2="964.8" stroke="#4c4c4c" stroke-width="1"/>
<circle cx="1583.35" cy="946.2" r="11.8" fill="url(#gCircDD)"/>
<path d="M1578.15 945.6 a5.6 5.6 0 0 1 10 -2.6 M1588.55 946.8 a5.6 5.6 0 0 1 -10 2.6" fill="none" stroke="#141414" stroke-width="2.4"/><path d="M1589.75 945 l1.6 -4.6 l-4.8 1Z M1576.95 947.4 l-1.6 4.6 l4.8 -1Z" fill="#141414"/>
<rect x="1611.7" y="927" width="58.3" height="37.8" fill="url(#gCtl)"/>
<line x1="1611.7" y1="927" x2="1611.7" y2="964.8" stroke="#4c4c4c" stroke-width="1"/>
<circle cx="1640.8" cy="946.2" r="11.8" fill="url(#gCirc)"/>
<line x1="1328.5" y1="965.7" x2="1670" y2="965.7" stroke="#454545" stroke-width="1.6"/>
<rect x="1328.5" y="966.6" width="170" height="37.4" fill="url(#gNav)"/>
<rect x="1499.5" y="966.6" width="170.5" height="37.4" fill="url(#gNav)"/>
<line x1="1499" y1="964.8" x2="1499" y2="1004" stroke="#4a4a4a" stroke-width="1.2"/>
<line x1="1328.5" y1="967.2" x2="1670" y2="967.2" stroke="#c0c0c0" stroke-width="0.9" opacity="0.6"/>
<line x1="1327.8" y1="927" x2="1327.8" y2="1004" stroke="#4a4a4a" stroke-width="1.2"/>
<circle cx="1367" cy="985.4" r="12.4" fill="url(#gCirc)"/>
<circle cx="1634.8" cy="985.4" r="12.4" fill="url(#gCirc)"/>
<path d="M1365.6 980.6 l-4.2 4.8 l4.2 4.8 M1371.6 980.6 l-4.2 4.8 l4.2 4.8" fill="none" stroke="#3a3a3a" stroke-width="1.7"/>
<path d="M1630.2 980.6 l4.2 4.8 l-4.2 4.8 M1636.2 980.6 l4.2 4.8 l-4.2 4.8" fill="none" stroke="#3a3a3a" stroke-width="1.7"/>
<text x="1400.8" y="994.9" font-size="27.4" fill="#3c3c3c" textLength="62.6" lengthAdjust="spacingAndGlyphs" stroke="#3c3c3c" stroke-width="0.9">Back</text>
<text x="1534.6" y="994.9" font-size="27.4" fill="#3c3c3c" textLength="63.3" lengthAdjust="spacingAndGlyphs" stroke="#3c3c3c" stroke-width="0.9">Next</text>
<rect x="976" y="87" width="694" height="558" fill="#1b1b1b"/>
<rect x="982.2" y="93.8" width="681.1" height="545.4" fill="#333"/>
<text x="1281.1" y="112.4" font-size="14" fill="#d8d8d8" textLength="83.5" lengthAdjust="spacingAndGlyphs">CIE 1976 u'v'</text>
<rect x="1019.5" y="118.4" width="640" height="491" fill="#252525"/>
<line x1="1013.4" y1="609.9" x2="1019.5" y2="609.9" stroke="#d0d0d0" stroke-width="1.5"/>
<text x="1012.9" y="617.5" font-size="13.6" fill="#d4d4d4" text-anchor="end" textLength="8.02" lengthAdjust="spacingAndGlyphs">0</text>
<line x1="1019.5" y1="609.4" x2="1019.5" y2="616.2" stroke="#d0d0d0" stroke-width="1.5"/>
<text x="1019.5" y="631.3" font-size="13.6" fill="#d4d4d4" text-anchor="middle" textLength="8.02" lengthAdjust="spacingAndGlyphs">0</text>
<line x1="1013.4" y1="568.96" x2="1019.5" y2="568.96" stroke="#d0d0d0" stroke-width="1.5"/>
<text x="1012.9" y="576.56" font-size="13.6" fill="#d4d4d4" text-anchor="end" textLength="28.06" lengthAdjust="spacingAndGlyphs">0,05</text>
<line x1="1072.82" y1="609.4" x2="1072.82" y2="616.2" stroke="#d0d0d0" stroke-width="1.5"/>
<text x="1072.82" y="631.3" font-size="13.6" fill="#d4d4d4" text-anchor="middle" textLength="28.06" lengthAdjust="spacingAndGlyphs">0,05</text>
<line x1="1013.4" y1="528.02" x2="1019.5" y2="528.02" stroke="#d0d0d0" stroke-width="1.5"/>
<text x="1012.9" y="535.62" font-size="13.6" fill="#d4d4d4" text-anchor="end" textLength="20.04" lengthAdjust="spacingAndGlyphs">0,1</text>
<line x1="1126.13" y1="609.4" x2="1126.13" y2="616.2" stroke="#d0d0d0" stroke-width="1.5"/>
<text x="1126.13" y="631.3" font-size="13.6" fill="#d4d4d4" text-anchor="middle" textLength="20.04" lengthAdjust="spacingAndGlyphs">0,1</text>
<line x1="1013.4" y1="487.08" x2="1019.5" y2="487.08" stroke="#d0d0d0" stroke-width="1.5"/>
<text x="1012.9" y="494.68" font-size="13.6" fill="#d4d4d4" text-anchor="end" textLength="28.06" lengthAdjust="spacingAndGlyphs">0,15</text>
<line x1="1179.44" y1="609.4" x2="1179.44" y2="616.2" stroke="#d0d0d0" stroke-width="1.5"/>
<text x="1179.44" y="631.3" font-size="13.6" fill="#d4d4d4" text-anchor="middle" textLength="28.06" lengthAdjust="spacingAndGlyphs">0,15</text>
<line x1="1013.4" y1="446.14" x2="1019.5" y2="446.14" stroke="#d0d0d0" stroke-width="1.5"/>
<text x="1012.9" y="453.74" font-size="13.6" fill="#d4d4d4" text-anchor="end" textLength="20.04" lengthAdjust="spacingAndGlyphs">0,2</text>
<line x1="1232.76" y1="609.4" x2="1232.76" y2="616.2" stroke="#d0d0d0" stroke-width="1.5"/>
<text x="1232.76" y="631.3" font-size="13.6" fill="#d4d4d4" text-anchor="middle" textLength="20.04" lengthAdjust="spacingAndGlyphs">0,2</text>
<line x1="1013.4" y1="405.2" x2="1019.5" y2="405.2" stroke="#d0d0d0" stroke-width="1.5"/>
<text x="1012.9" y="412.8" font-size="13.6" fill="#d4d4d4" text-anchor="end" textLength="28.06" lengthAdjust="spacingAndGlyphs">0,25</text>
<line x1="1286.08" y1="609.4" x2="1286.08" y2="616.2" stroke="#d0d0d0" stroke-width="1.5"/>
<text x="1286.08" y="631.3" font-size="13.6" fill="#d4d4d4" text-anchor="middle" textLength="28.06" lengthAdjust="spacingAndGlyphs">0,25</text>
<line x1="1013.4" y1="364.26" x2="1019.5" y2="364.26" stroke="#d0d0d0" stroke-width="1.5"/>
<text x="1012.9" y="371.86" font-size="13.6" fill="#d4d4d4" text-anchor="end" textLength="20.04" lengthAdjust="spacingAndGlyphs">0,3</text>
<line x1="1339.39" y1="609.4" x2="1339.39" y2="616.2" stroke="#d0d0d0" stroke-width="1.5"/>
<text x="1339.39" y="631.3" font-size="13.6" fill="#d4d4d4" text-anchor="middle" textLength="20.04" lengthAdjust="spacingAndGlyphs">0,3</text>
<line x1="1013.4" y1="323.32" x2="1019.5" y2="323.32" stroke="#d0d0d0" stroke-width="1.5"/>
<text x="1012.9" y="330.92" font-size="13.6" fill="#d4d4d4" text-anchor="end" textLength="28.06" lengthAdjust="spacingAndGlyphs">0,35</text>
<line x1="1392.7" y1="609.4" x2="1392.7" y2="616.2" stroke="#d0d0d0" stroke-width="1.5"/>
<text x="1392.7" y="631.3" font-size="13.6" fill="#d4d4d4" text-anchor="middle" textLength="28.06" lengthAdjust="spacingAndGlyphs">0,35</text>
<line x1="1013.4" y1="282.38" x2="1019.5" y2="282.38" stroke="#d0d0d0" stroke-width="1.5"/>
<text x="1012.9" y="289.98" font-size="13.6" fill="#d4d4d4" text-anchor="end" textLength="20.04" lengthAdjust="spacingAndGlyphs">0,4</text>
<line x1="1446.02" y1="609.4" x2="1446.02" y2="616.2" stroke="#d0d0d0" stroke-width="1.5"/>
<text x="1446.02" y="631.3" font-size="13.6" fill="#d4d4d4" text-anchor="middle" textLength="20.04" lengthAdjust="spacingAndGlyphs">0,4</text>
<line x1="1013.4" y1="241.44" x2="1019.5" y2="241.44" stroke="#d0d0d0" stroke-width="1.5"/>
<text x="1012.9" y="249.04" font-size="13.6" fill="#d4d4d4" text-anchor="end" textLength="28.06" lengthAdjust="spacingAndGlyphs">0,45</text>
<line x1="1499.34" y1="609.4" x2="1499.34" y2="616.2" stroke="#d0d0d0" stroke-width="1.5"/>
<text x="1499.34" y="631.3" font-size="13.6" fill="#d4d4d4" text-anchor="middle" textLength="28.06" lengthAdjust="spacingAndGlyphs">0,45</text>
<line x1="1013.4" y1="200.5" x2="1019.5" y2="200.5" stroke="#d0d0d0" stroke-width="1.5"/>
<text x="1012.9" y="208.1" font-size="13.6" fill="#d4d4d4" text-anchor="end" textLength="20.04" lengthAdjust="spacingAndGlyphs">0,5</text>
<line x1="1552.65" y1="609.4" x2="1552.65" y2="616.2" stroke="#d0d0d0" stroke-width="1.5"/>
<text x="1552.65" y="631.3" font-size="13.6" fill="#d4d4d4" text-anchor="middle" textLength="20.04" lengthAdjust="spacingAndGlyphs">0,5</text>
<line x1="1013.4" y1="159.56" x2="1019.5" y2="159.56" stroke="#d0d0d0" stroke-width="1.5"/>
<text x="1012.9" y="167.16" font-size="13.6" fill="#d4d4d4" text-anchor="end" textLength="28.06" lengthAdjust="spacingAndGlyphs">0,55</text>
<line x1="1605.97" y1="609.4" x2="1605.97" y2="616.2" stroke="#d0d0d0" stroke-width="1.5"/>
<text x="1605.97" y="631.3" font-size="13.6" fill="#d4d4d4" text-anchor="middle" textLength="28.06" lengthAdjust="spacingAndGlyphs">0,55</text>
</svg>
<div style="position:absolute;left:1020px;top:119px;width:639.3px;height:490.1px;background:#000;isolation:isolate;overflow:hidden;clip-path:polygon(273.4px 475.4px,273.3px 475.4px,273.2px 475.3px,273.1px 475.4px,273.0px 475.5px,272.9px 475.5px,272.7px 475.5px,272.5px 475.4px,272.4px 475.6px,272.3px 475.7px,272.2px 475.8px,272.1px 475.9px,271.8px 475.9px,271.5px 475.9px,271.2px 475.8px,270.9px 475.8px,270.5px 475.8px,270.2px 475.8px,269.8px 475.7px,269.2px 475.5px,268.4px 475.0px,267.4px 474.4px,266.3px 473.7px,265.1px 472.8px,263.6px 471.7px,262.0px 470.4px,260.0px 468.9px,257.8px 467.1px,255.5px 465.1px,252.8px 462.9px,249.9px 460.4px,246.8px 457.8px,243.3px 454.8px,239.3px 451.6px,235.0px 448.0px,230.2px 444.1px,225.1px 439.8px,219.5px 435.2px,213.5px 430.1px,207.0px 424.3px,200.1px 417.9px,192.7px 410.8px,184.6px 402.5px,175.6px 392.5px,165.3px 380.2px,153.9px 366.0px,141.9px 349.9px,129.3px 332.1px,116.1px 312.4px,102.6px 291.0px,89.0px 268.5px,75.5px 245.3px,62.6px 221.8px,50.7px 198.3px,40.3px 175.6px,31.1px 153.9px,23.1px 133.6px,16.6px 115.1px,11.4px 98.6px,7.6px 84.1px,4.9px 71.4px,3.3px 60.5px,2.7px 51.1px,3.0px 43.0px,4.2px 36.1px,6.2px 30.1px,8.9px 25.1px,12.3px 21.1px,16.3px 18.0px,20.8px 15.6px,25.7px 14.0px,31.0px 12.9px,36.5px 12.2px,42.3px 11.8px,48.3px 11.6px,54.3px 11.5px,60.3px 11.5px,66.3px 11.6px,72.5px 11.8px,78.8px 12.0px,85.2px 12.4px,91.8px 12.8px,98.7px 13.3px,105.7px 13.9px,113.1px 14.6px,120.7px 15.3px,128.5px 16.1px,136.8px 16.9px,145.3px 17.8px,154.2px 18.7px,163.5px 19.7px,173.1px 20.8px,183.2px 21.9px,193.6px 23.1px,204.5px 24.3px,215.9px 25.6px,227.6px 27.0px,239.9px 28.4px,252.5px 29.8px,265.6px 31.3px,279.2px 32.9px,293.1px 34.5px,307.5px 36.1px,322.1px 37.8px,337.1px 39.5px,352.4px 41.3px,367.9px 43.1px,383.5px 44.9px,398.8px 46.6px,413.8px 48.3px,428.7px 50.0px,443.6px 51.7px,458.1px 53.4px,472.2px 55.0px,485.5px 56.5px,498.2px 58.0px,510.4px 59.4px,521.9px 60.7px,532.8px 62.0px,542.9px 63.1px,552.4px 64.2px,561.2px 65.2px,569.4px 66.2px,577.0px 67.0px,584.1px 67.8px,590.8px 68.6px,597.2px 69.3px,603.2px 70.0px,608.8px 70.7px,614.0px 71.3px,618.9px 71.8px,623.4px 72.4px,627.5px 72.8px,631.2px 73.3px,634.5px 73.6px,637.4px 74.0px,640.1px 74.3px,642.5px 74.6px,644.7px 74.8px,646.6px 75.0px,648.3px 75.2px,649.7px 75.4px,650.9px 75.5px,652.0px 75.6px,653.0px 75.8px,654.0px 75.9px,654.8px 76.0px,655.6px 76.1px,656.4px 76.2px,657.2px 76.3px,658.0px 76.3px,658.8px 76.4px,659.5px 76.5px,660.1px 76.6px,660.5px 76.6px,660.8px 76.7px,661.0px 76.7px,661.3px 76.7px,661.4px 76.7px,661.6px 76.8px,661.6px 76.8px);">
<div class="cl" style="background:conic-gradient(from 0deg at 186.57px 361.32px,#920000 0deg,#c20000 2.5deg,#f10000 4.75deg,#fc0000 5.25deg,#ff0000 5.5deg,#ff0000 170.8deg,#000000 171deg,#000000 350.8deg,#270000 353.5deg,#560000 356.5deg,#850000 359.2deg,#920000 360deg),conic-gradient(from 0deg at 132.79px 30.03px,#ff0000 0deg,#ff0000 134.8deg,#d70000 138.5deg,#b40000 142.2deg,#920000 146.5deg,#6e0000 151.5deg,#480000 157.5deg,#1f0000 164.8deg,#000000 170.8deg,#000000 350.8deg,#ff0000 351deg,#ff0000 360deg)"></div>
<div class="cl" style="background:conic-gradient(from 0deg at 186.57px 361.32px,#00ff00 0deg,#00ff00 5.25deg,#00fc00 5.5deg,#00e200 6.75deg,#00c800 8.25deg,#00af00 10deg,#009700 12deg,#008100 14.25deg,#006a00 17deg,#005500 20.25deg,#004100 24deg,#002d00 28.75deg,#001a00 34.5deg,#000600 42deg,#000000 44.75deg,#000000 224.2deg,#00ff00 224.5deg,#00ff00 360deg),conic-gradient(from 0deg at 480.09px 62.46px,#00ff00 0deg,#00ff00 44.25deg,#000000 44.5deg,#000000 224.5deg,#001400 231.8deg,#002800 237.5deg,#003c00 242deg,#005100 245.8deg,#006700 249deg,#007e00 251.8deg,#009500 254deg,#00ae00 256deg,#00c800 257.8deg,#00e300 259.2deg,#00fd00 260.5deg,#00ff00 260.8deg,#00ff00 360deg)"></div>
<div class="cl" style="background:conic-gradient(from 0deg at 132.79px 30.03px,#000000 0deg,#000000 95.25deg,#000022 103deg,#000047 110.5deg,#000069 116.5deg,#000089 121.5deg,#0000a9 125.8deg,#0000c9 129.5deg,#0000e9 132.8deg,#0000ff 134.8deg,#0000ff 275.2deg,#000000 275.5deg,#000000 360deg),conic-gradient(from 0deg at 480.09px 62.46px,#000000 0deg,#000000 95.25deg,#0000ff 95.5deg,#0000ff 260.5deg,#0000fb 260.8deg,#0000d0 262.8deg,#0000a3 265deg,#000076 267.5deg,#000049 270.2deg,#00001d 273.2deg,#000001 275.2deg,#000000 275.8deg,#000000 360deg)"></div>
</div>
<div style="position:absolute;left:1455.5px;top:437.4px;width:196.8px;height:129.7px;background:#000;isolation:isolate;overflow:hidden;">
<div class="cl" style="background:conic-gradient(from 0deg at -640.56px 841.40px,#000000 0deg,#000000 23.5deg,#050000 24.25deg,#260000 28deg,#470000 31.25deg,#6a0000 34.25deg,#8b0000 36.75deg,#ac0000 39deg,#cd0000 41deg,#ee0000 42.75deg,#fd0000 43.5deg,#ff0000 43.75deg,#ff0000 203.5deg,#000000 203.8deg,#000000 360deg),conic-gradient(from 0deg at -228.96px -100.36px,#000000 0deg,#000000 23.5deg,#ff0000 23.75deg,#ff0000 175.8deg,#c80000 181deg,#900000 186.8deg,#520000 193.8deg,#010000 203.5deg,#000000 204.2deg,#000000 360deg)"></div>
<div class="cl" style="background:conic-gradient(from 0deg at -640.56px 841.40px,#00ff00 0deg,#00ff00 43.5deg,#00fc00 43.75deg,#00df00 45.25deg,#00c100 47deg,#00a500 49deg,#008900 51.25deg,#006f00 53.75deg,#005400 56.75deg,#003a00 60.25deg,#002100 64.25deg,#000800 69deg,#000000 70.75deg,#000000 250.5deg,#00ff00 250.8deg,#00ff00 360deg),conic-gradient(from 0deg at 704.00px 370.52px,#00ff00 0deg,#00ff00 70.5deg,#000000 70.75deg,#000000 250.8deg,#002300 254.5deg,#004400 257.8deg,#006500 260.5deg,#008600 263deg,#00a900 265.2deg,#00cb00 267.2deg,#00ec00 269deg,#00fc00 269.8deg,#00ff00 270deg,#00ff00 360deg)"></div>
<div class="cl" style="background:conic-gradient(from 0deg at -228.96px -100.36px,#000000 0deg,#000001 117deg,#000029 133deg,#000046 143deg,#000061 150.8deg,#00007a 156.8deg,#000093 161.8deg,#0000ac 166deg,#0000c5 169.5deg,#0000de 172.5deg,#0000f9 175.2deg,#0000ff 175.8deg,#0000ff 296.8deg,#000000 297deg,#000000 360deg),conic-gradient(from 0deg at 704.00px 370.52px,#000000 0deg,#000000 116.8deg,#0000ff 117deg,#0000ff 269.8deg,#0000fd 270deg,#0000df 271.5deg,#0000c1 273.2deg,#0000a4 275.2deg,#000088 277.5deg,#00006d 280deg,#000053 283deg,#000039 286.5deg,#000020 290.5deg,#000007 295.2deg,#000000 296.8deg,#000000 360deg)"></div>
</div>
<svg width="1670" height="1004" viewBox="0 0 1670 1004">
<clipPath id="cPlot"><rect x="1020" y="119" width="639.3" height="490.1"/></clipPath>
<path clip-path="url(#cPlot)" fill-rule="evenodd" fill="#000" fill-opacity="0.4" d="M1293.4 594.4 L1293.3 594.4 L1293.2 594.3 L1293.1 594.4 L1293.0 594.5 L1292.9 594.5 L1292.7 594.5 L1292.5 594.4 L1292.4 594.6 L1292.3 594.7 L1292.2 594.8 L1292.1 594.9 L1291.8 594.9 L1291.5 594.9 L1291.2 594.8 L1290.9 594.8 L1290.5 594.8 L1290.2 594.8 L1289.8 594.7 L1289.2 594.5 L1288.4 594.0 L1287.4 593.4 L1286.3 592.7 L1285.1 591.8 L1283.6 590.7 L1282.0 589.4 L1280.0 587.9 L1277.8 586.1 L1275.5 584.1 L1272.8 581.9 L1269.9 579.4 L1266.8 576.8 L1263.3 573.8 L1259.3 570.6 L1255.0 567.0 L1250.2 563.1 L1245.1 558.8 L1239.5 554.2 L1233.5 549.1 L1227.0 543.3 L1220.1 536.9 L1212.7 529.8 L1204.6 521.5 L1195.6 511.5 L1185.3 499.2 L1173.9 485.0 L1161.9 468.9 L1149.3 451.1 L1136.1 431.4 L1122.6 410.0 L1109.0 387.5 L1095.5 364.3 L1082.6 340.8 L1070.7 317.3 L1060.3 294.6 L1051.1 272.9 L1043.1 252.6 L1036.6 234.1 L1031.4 217.6 L1027.6 203.1 L1024.9 190.4 L1023.3 179.5 L1022.7 170.1 L1023.0 162.0 L1024.2 155.1 L1026.2 149.1 L1028.9 144.1 L1032.3 140.1 L1036.3 137.0 L1040.8 134.6 L1045.7 133.0 L1051.0 131.9 L1056.5 131.2 L1062.3 130.8 L1068.3 130.6 L1074.3 130.5 L1080.3 130.5 L1086.3 130.6 L1092.5 130.8 L1098.8 131.0 L1105.2 131.4 L1111.8 131.8 L1118.7 132.3 L1125.7 132.9 L1133.1 133.6 L1140.7 134.3 L1148.5 135.1 L1156.8 135.9 L1165.3 136.8 L1174.2 137.7 L1183.5 138.7 L1193.1 139.8 L1203.2 140.9 L1213.6 142.1 L1224.5 143.3 L1235.9 144.6 L1247.6 146.0 L1259.9 147.4 L1272.5 148.8 L1285.6 150.3 L1299.2 151.9 L1313.1 153.5 L1327.5 155.1 L1342.1 156.8 L1357.1 158.5 L1372.4 160.3 L1387.9 162.1 L1403.5 163.9 L1418.8 165.6 L1433.8 167.3 L1448.7 169.0 L1463.6 170.7 L1478.1 172.4 L1492.2 174.0 L1505.5 175.5 L1518.2 177.0 L1530.4 178.4 L1541.9 179.7 L1552.8 181.0 L1562.9 182.1 L1572.4 183.2 L1581.2 184.2 L1589.4 185.2 L1597.0 186.0 L1604.1 186.8 L1610.8 187.6 L1617.2 188.3 L1623.2 189.0 L1628.8 189.7 L1634.0 190.3 L1638.9 190.8 L1643.4 191.4 L1647.5 191.8 L1651.2 192.3 L1654.5 192.6 L1657.4 193.0 L1660.1 193.3 L1662.5 193.6 L1664.7 193.8 L1666.6 194.0 L1668.3 194.2 L1669.7 194.4 L1670.9 194.5 L1672.0 194.6 L1673.0 194.8 L1674.0 194.9 L1674.8 195.0 L1675.6 195.1 L1676.4 195.2 L1677.2 195.3 L1678.0 195.3 L1678.8 195.4 L1679.5 195.5 L1680.1 195.6 L1680.5 195.6 L1680.8 195.7 L1681.0 195.7 L1681.3 195.7 L1681.4 195.7 L1681.6 195.8 L1681.6 195.8 Z M1500.1 181.5 L1152.8 149.0 L1206.6 480.3 Z"/>
<rect x="1019.5" y="118.4" width="640" height="491" fill="none" stroke="#a0a0a0" stroke-width="1.4"/>
<rect x="1146.25" y="141.25" width="12.5" height="12.5" fill="none" stroke="#fff" stroke-width="1.9" opacity="0.86"/>
<rect x="1170.25" y="165.25" width="12.5" height="12.5" fill="none" stroke="#fff" stroke-width="1.9" opacity="0.86"/>
<rect x="1210.25" y="157.15" width="12.5" height="12.5" fill="none" stroke="#fff" stroke-width="1.9" opacity="0.86"/>
<rect x="1207.25" y="179.25" width="12.5" height="12.5" fill="none" stroke="#fff" stroke-width="1.9" opacity="0.86"/>
<rect x="1230.05" y="149.15" width="12.5" height="12.5" fill="none" stroke="#fff" stroke-width="1.9" opacity="0.86"/>
<rect x="1257.25" y="153.25" width="12.5" height="12.5" fill="none" stroke="#fff" stroke-width="1.9" opacity="0.86"/>
<rect x="1289.25" y="160.25" width="12.5" height="12.5" fill="none" stroke="#fff" stroke-width="1.9" opacity="0.86"/>
<rect x="1272.25" y="193.15" width="12.5" height="12.5" fill="none" stroke="#fff" stroke-width="1.9" opacity="0.86"/>
<rect x="1261.25" y="199.15" width="12.5" height="12.5" fill="none" stroke="#fff" stroke-width="1.9" opacity="0.86"/>
<rect x="1177.25" y="210.15" width="12.5" height="12.5" fill="none" stroke="#fff" stroke-width="1.9" opacity="0.86"/>
<rect x="1161.25" y="229.35" width="12.5" height="12.5" fill="none" stroke="#fff" stroke-width="1.9" opacity="0.86"/>
<rect x="1166.25" y="261.25" width="12.5" height="12.5" fill="none" stroke="#fff" stroke-width="1.9" opacity="0.86"/>
<rect x="1200.15" y="258.25" width="12.5" height="12.5" fill="none" stroke="#fff" stroke-width="1.9" opacity="0.86"/>
<rect x="1220.75" y="263.25" width="12.5" height="12.5" fill="none" stroke="#fff" stroke-width="1.9" opacity="0.86"/>
<rect x="1256.25" y="281.35" width="12.5" height="12.5" fill="none" stroke="#fff" stroke-width="1.9" opacity="0.86"/>
<rect x="1203.25" y="311.25" width="12.5" height="12.5" fill="none" stroke="#fff" stroke-width="1.9" opacity="0.86"/>
<rect x="1318.75" y="252.05" width="12.5" height="12.5" fill="none" stroke="#fff" stroke-width="1.9" opacity="0.86"/>
<rect x="1332.25" y="164.25" width="12.5" height="12.5" fill="none" stroke="#fff" stroke-width="1.9" opacity="0.86"/>
<rect x="1493.15" y="173.65" width="12.5" height="12.5" fill="none" stroke="#fff" stroke-width="1.9" opacity="0.86"/>
<rect x="1412.25" y="194.15" width="12.5" height="12.5" fill="none" stroke="#fff" stroke-width="1.9" opacity="0.86"/>
<rect x="1351.15" y="206.15" width="12.5" height="12.5" fill="none" stroke="#fff" stroke-width="1.9" opacity="0.86"/>
<rect x="1203.25" y="361.45" width="12.5" height="12.5" fill="none" stroke="#fff" stroke-width="1.9" opacity="0.86"/>
<rect x="1338.15" y="331.15" width="12.5" height="12.5" fill="none" stroke="#fff" stroke-width="1.9" opacity="0.86"/>
<rect x="1200.45" y="473.15" width="12.5" height="12.5" fill="none" stroke="#fff" stroke-width="1.9" opacity="0.86"/>
<rect x="1223.3" y="218.3" width="12.2" height="12.2" fill="none" stroke="#000" stroke-width="2.4" opacity="1"/>
<circle cx="1140.8" cy="138" r="4.2" fill="#00ff00" stroke="#0a0a0a" stroke-width="1.1"/>
<circle cx="1165.9" cy="162.5" r="4.2" fill="#5a8a50" stroke="#0a0a0a" stroke-width="1.1"/>
<circle cx="1209.4" cy="153.9" r="4.2" fill="#a8b850" stroke="#0a0a0a" stroke-width="1.1"/>
<circle cx="1208.1" cy="177.5" r="4.2" fill="#5a6a40" stroke="#0a0a0a" stroke-width="1.1"/>
<circle cx="1232.4" cy="147.5" r="4.2" fill="#ffee00" stroke="#0a0a0a" stroke-width="1.1"/>
<circle cx="1261.1" cy="151.5" r="4.2" fill="#e8c030" stroke="#0a0a0a" stroke-width="1.1"/>
<circle cx="1295.3" cy="158.1" r="4.2" fill="#e0a040" stroke="#0a0a0a" stroke-width="1.1"/>
<circle cx="1287.1" cy="194.9" r="4.2" fill="#705848" stroke="#0a0a0a" stroke-width="1.1"/>
<circle cx="1268" cy="201.8" r="4.2" fill="#c09888" stroke="#0a0a0a" stroke-width="1.1"/>
<circle cx="1176.5" cy="212.2" r="4.2" fill="#70b8a0" stroke="#0a0a0a" stroke-width="1.1"/>
<circle cx="1160.5" cy="234.4" r="4.2" fill="#00ffff" stroke="#0a0a0a" stroke-width="1.1"/>
<circle cx="1228.4" cy="222" r="4.2" fill="#a0a0a0" stroke="#0a0a0a" stroke-width="1.1"/>
<circle cx="1168.6" cy="268.6" r="4.2" fill="#2090a0" stroke="#0a0a0a" stroke-width="1.1"/>
<circle cx="1205.1" cy="266.9" r="4.2" fill="#7088a8" stroke="#0a0a0a" stroke-width="1.1"/>
<circle cx="1235.1" cy="268.3" r="4.2" fill="#000000" stroke="#0a0a0a" stroke-width="1.1"/>
<circle cx="1228.4" cy="272.5" r="4.2" fill="#9090b8" stroke="#0a0a0a" stroke-width="1.1"/>
<circle cx="1272" cy="297.1" r="4.2" fill="#604868" stroke="#0a0a0a" stroke-width="1.1"/>
<circle cx="1210.5" cy="331.2" r="4.2" fill="#5868a0" stroke="#0a0a0a" stroke-width="1.1"/>
<circle cx="1344.1" cy="163.3" r="4.2" fill="#d08840" stroke="#0a0a0a" stroke-width="1.1"/>
<circle cx="1514.1" cy="178.6" r="4.2" fill="#ff0000" stroke="#0a0a0a" stroke-width="1.1"/>
<circle cx="1443.7" cy="196.4" r="4.2" fill="#c04050" stroke="#0a0a0a" stroke-width="1.1"/>
<circle cx="1371.5" cy="211.5" r="4.2" fill="#c85868" stroke="#0a0a0a" stroke-width="1.1"/>
<circle cx="1338.6" cy="264.4" r="4.2" fill="#b85898" stroke="#0a0a0a" stroke-width="1.1"/>
<circle cx="1215" cy="391.2" r="4.2" fill="#484880" stroke="#0a0a0a" stroke-width="1.1"/>
<circle cx="1359.2" cy="349.1" r="4.2" fill="#ff00ff" stroke="#0a0a0a" stroke-width="1.1"/>
<circle cx="1217.7" cy="502.6" r="3.2" fill="#0000ff" stroke="#0a0a0a" stroke-width="1.1"/>
<path fill="#000" fill-opacity="0.4" d="M1455.5 437.4 L1652.3 437.4 L1652.3 551.93 L1455.5 452.6Z"/>
<rect x="1454.8" y="436.7" width="198.2" height="131.1" fill="none" stroke="#8c8c8c" stroke-width="1.6"/>
<rect x="1547.15" y="495.25" width="12.5" height="12.5" fill="none" stroke="#fff" stroke-width="1.9" opacity="0.86"/>
<rect x="1622.25" y="551.25" width="12.5" height="12.5" fill="none" stroke="#fff" stroke-width="1.9" opacity="0.86"/>
<circle cx="1578.1" cy="446.4" r="4.4" fill="#ffee00" stroke="#0a0a0a" stroke-width="1.1"/>
<rect x="1404.2" y="577.6" width="251.8" height="27" fill="#323232"/>
<text x="1404.9" y="598.8" font-size="19.6" fill="#f0f0f0" textLength="211.5" lengthAdjust="spacingAndGlyphs">RGB Triplet: 255, 255, 0</text>
</svg></body></html>
